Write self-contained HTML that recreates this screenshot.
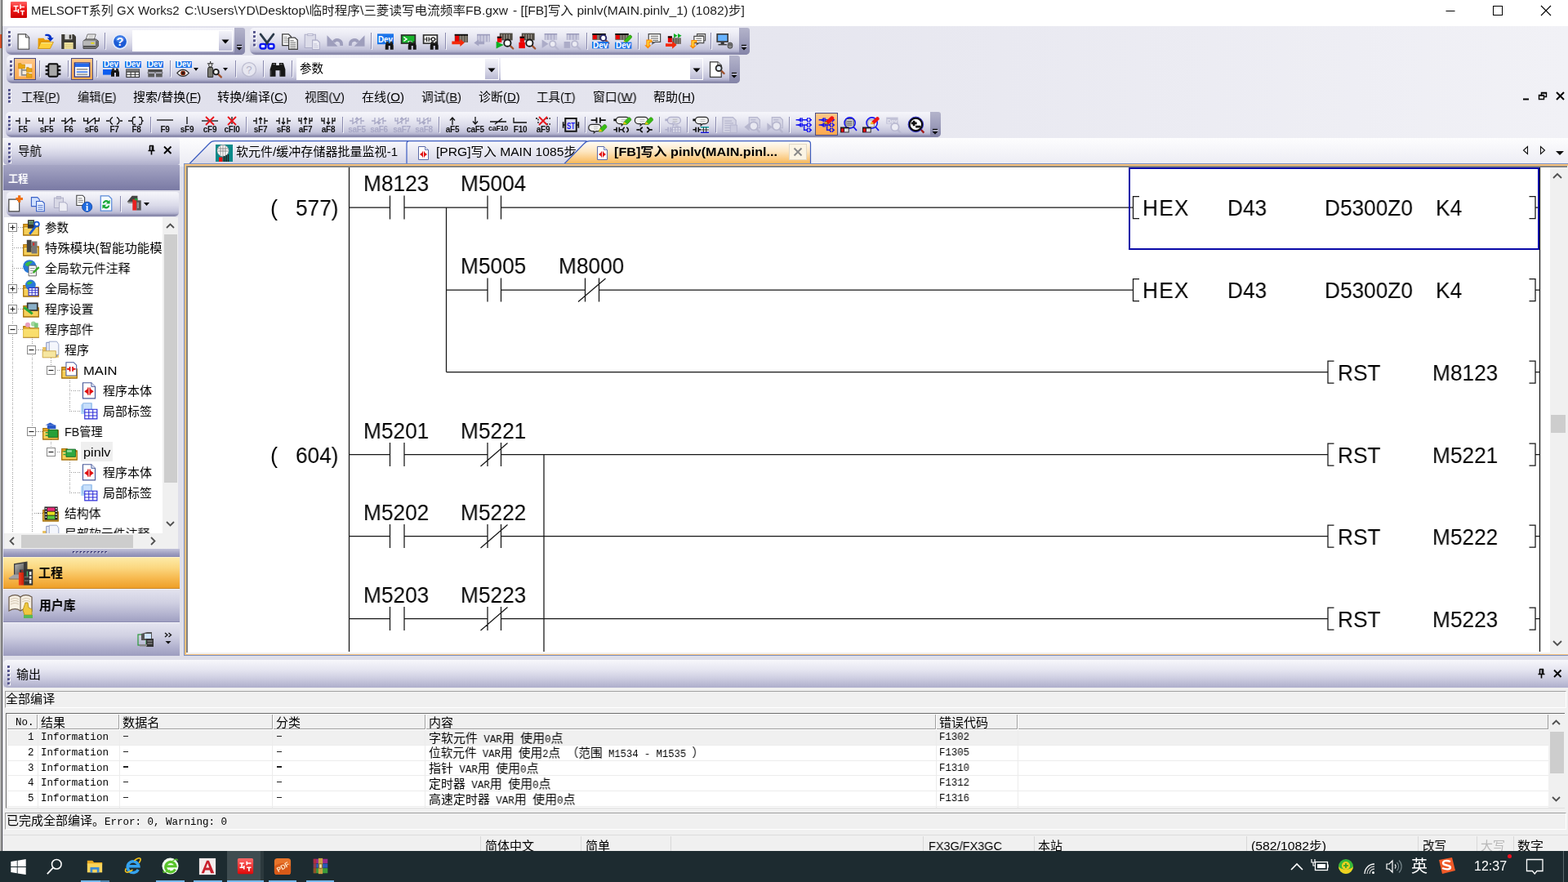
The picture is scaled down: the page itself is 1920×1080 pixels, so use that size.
<!DOCTYPE html>
<html><head><meta charset="utf-8"><title>GX Works2</title><style>html,body{margin:0;padding:0;background:#fff;}
body{width:1920px;height:1080px;overflow:hidden;font-family:"Liberation Sans","Noto Sans CJK SC",sans-serif;}
#root{position:relative;width:1920px;height:1080px;overflow:hidden;background:#dfdfea;}
#root div{position:absolute;box-sizing:border-box;}
.t{white-space:nowrap;line-height:1.2;color:#000;transform-origin:0 50%;will-change:transform;}
.mono{font-family:"Liberation Mono","Noto Sans CJK SC",monospace;}
.tb{border-radius:5px 3px 5px 7px;background:linear-gradient(#f6f6fb 0%,#ebebf4 25%,#dadae9 55%,#c3c3da 80%,#adadca 89%,#8f8fb0 93%,#8585a8 100%);}
svg.i{position:absolute;overflow:visible;}
.lab{text-align:center;font-weight:bold;letter-spacing:-0.3px;line-height:1.1;}
.lad{color:#000;line-height:1.149;transform:scaleX(0.965);}
.osong{font-family:"Liberation Mono","Noto Sans CJK SC",monospace;}
.osong .k{font-size:1.2em;font-family:"Noto Sans CJK SC","Liberation Sans",sans-serif;}
</style></head><body><div id="root"><div style="left:0px;top:0px;width:1920px;height:32px;background:#fff;"></div>
<div style="left:0px;top:32px;width:1920px;height:140px;background:linear-gradient(90deg,#dfdfeb 0%,#e6e6ef 50%,#f1f1f6 100%);"></div>
<div style="left:0px;top:168.5px;width:1920px;height:35px;background:linear-gradient(#fdfdfe,#ebebf3);"></div>
<div style="left:0px;top:0px;width:2.3px;height:1042px;background:#adadad;"></div>
<div style="left:2.3px;top:0px;width:1.1px;height:1042px;background:#484848;"></div>
<div style="left:0px;top:42px;width:2px;height:17px;background:#d0502a;"></div>
<svg class="i" style="left:13px;top:2px" width="20" height="20" viewBox="0 0 20 20"><defs><linearGradient id="gi" x1="0" y1="0" x2="0" y2="1"><stop offset="0" stop-color="#ff6464"/><stop offset="0.450" stop-color="#f01818"/><stop offset="1" stop-color="#cc0000"/></linearGradient></defs><rect width="20" height="20" rx="1" fill="url(#gi)"/><path d="M3.500 5.500H9.500M6.500 5.500V11.500M3.500 11.500H9.500M9.500 9V14M12 3.500V9M12 6.500H17M12 11.500H17M14.500 11.500V16.500" stroke="#fff" stroke-width="1.500" fill="none"/></svg>
<div class="t" style="left:38px;top:4px;font-size:15px;transform:scaleX(1.0004);color:#1c1c1c;">MELSOFT系列 GX Works2</div>
<div class="t" style="left:225.5px;top:4px;font-size:15px;transform:scaleX(1.0396);color:#1c1c1c;">C:\Users\YD\Desktop\临时程序\三菱读写电流频率FB.gxw</div>
<div class="t" style="left:627.5px;top:4px;font-size:15px;transform:scaleX(1.0450);color:#1c1c1c;">- [[FB]写入 pinlv(MAIN.pinlv_1) (1082)步]</div>
<svg class="i" style="left:1760px;top:0" width="160" height="28" viewBox="0 0 160 28"><path d="M10.500 13.500H21.500" stroke="#000" stroke-width="1"/><rect x="68.500" y="7.500" width="11" height="11" fill="none" stroke="#000" stroke-width="1"/><path d="M127 7L139 19M139 7L127 19" stroke="#000" stroke-width="1.1"/></svg>
<div class="tb" style="left:7px;top:33.5px;width:293px;height:33.5px;"></div>
<div style="left:286.5px;top:33.5px;width:13.5px;height:33.5px;background:linear-gradient(#b4b4cb,#9c9cba 55%,#8383a7);border-radius:0 3px 5px 0;"></div>
<svg class="i" style="left:289px;top:53.5px" width="9" height="9" viewBox="0 0 9 9"><path d="M1 1.500h6" stroke="#000" stroke-width="1.300"/><path d="M0.500 4h7l-3.500 3.500z" fill="#000"/><path d="M2 2.800h6" stroke="#fff" stroke-width="0.800" opacity="0.800"/></svg>
<svg class="i" style="left:10.4px;top:38.3px" width="5" height="22.8"><rect x="1.200" y="1.20" width="2.800" height="2.800" fill="#fff"/><rect x="0" y="0.00" width="2.900" height="2.900" fill="#50508a"/><rect x="1.200" y="6.40" width="2.800" height="2.800" fill="#fff"/><rect x="0" y="5.20" width="2.900" height="2.900" fill="#50508a"/><rect x="1.200" y="11.60" width="2.800" height="2.800" fill="#fff"/><rect x="0" y="10.40" width="2.900" height="2.900" fill="#50508a"/><rect x="1.200" y="16.80" width="2.800" height="2.800" fill="#fff"/><rect x="0" y="15.60" width="2.900" height="2.900" fill="#50508a"/></svg>
<svg class="i" style="left:19px;top:40.5px" width="20" height="20" viewBox="0 0 16 16"><path d="M2.500 0.600h7.500l3.300 3.300v11.300h-10.800z" fill="#fff" stroke="#4c4c4c" stroke-width="1"/><path d="M10 0.600v3.300h3.300" fill="#d9d9d9" stroke="#4c4c4c" stroke-width="0.800"/><path d="M3.200 14.600h9.500v-9" stroke="#c8c8c8" stroke-width="0.800" fill="none"/></svg>
<svg class="i" style="left:46px;top:40.5px" width="20" height="20" viewBox="0 0 16 16"><path d="M0.500 4.500h5.500l1.200 1.600h5.300v8.500h-12z" fill="#e89a00"/><path d="M0.500 14.800l2.700-6.300h12.300l-3.200 6.300z" fill="#ffd03a" stroke="#c88600" stroke-width="0.600"/><path d="M3.500 9.300h11" stroke="#fff0a0" stroke-width="0.800"/><path d="M7.500 0.800c3.500-1 6.300 0.700 6.300 3.400h2l-3.200 3.600-3.200-3.600h2c0-1.300-1.700-2.300-3.900-1.700z" fill="#0030c8"/></svg>
<svg class="i" style="left:74px;top:40.5px" width="20" height="20" viewBox="0 0 16 16"><path d="M1 0.800h12l2.200 2.200v12.200h-14.200z" fill="#3c3a34"/><rect x="4.300" y="0.800" width="7.200" height="5" fill="#dcdcdc"/><rect x="8.600" y="1.300" width="1.900" height="3.900" fill="#3c3a34"/><rect x="3.700" y="8.800" width="8.800" height="6.400" fill="#f7e9a8"/><path d="M4.300 10.600h7.600M4.300 12.400h7.600M4.300 14.200h7.600" stroke="#cdba6e" stroke-width="0.700"/></svg>
<svg class="i" style="left:101px;top:40.5px" width="20" height="20" viewBox="0 0 16 16"><path d="M5 0.800h8l-1.800 5.500h-8z" fill="#f6f6f6" stroke="#5a5a5a" stroke-width="0.700"/><path d="M6 2.500h5M5.500 4h5" stroke="#aaa" stroke-width="0.600"/><path d="M0.800 7.300l2.500-1.800h9.700l2.500 1.800v5.200l-2.500 2.300h-12.200z" fill="#8a8a8a" stroke="#3c3c3c" stroke-width="0.700"/><rect x="0.800" y="7.300" width="12" height="4.500" fill="#b8b8b8"/><rect x="8.300" y="8.800" width="3.300" height="1.300" fill="#e8dc00"/><path d="M0.800 12.800h12" stroke="#4c4c4c" stroke-width="1.400"/><path d="M12.800 7.300l2.700 0v5.200l-2.700 2.300z" fill="#6c6c6c"/></svg>
<div style="left:128px;top:39.5px;width:1px;height:20px;background:#8a8aae;"></div>
<div style="left:129px;top:40.5px;width:1px;height:20px;background:#f6f6fb;"></div>
<svg class="i" style="left:137px;top:40.5px" width="20" height="20" viewBox="0 0 16 16"><circle cx="8" cy="8" r="7.600" fill="#e6eefc" opacity="0.950"/><circle cx="8" cy="8" r="6.300" fill="#1c5bd6"/><ellipse cx="8" cy="5.500" rx="4.600" ry="3.300" fill="#5d9af4" opacity="0.600"/><text x="8" y="12.300" text-anchor="middle" font-size="11.500" font-weight="bold" font-family="Liberation Sans" fill="#fff">?</text></svg>
<div style="left:162px;top:37.0px;width:122.5px;height:25.5px;background:#fff;"></div>
<div style="left:268.0px;top:38.0px;width:15.5px;height:23.5px;background:linear-gradient(#f3f3f9,#dcdcea 50%,#b9b9d3);"></div>
<svg class="i" style="left:271.0px;top:47.75px" width="10" height="6" viewBox="0 0 10 6"><path d="M0.500 0.500h9l-4.500 5z" fill="#000"/></svg>
<div class="tb" style="left:306px;top:33.5px;width:612px;height:33.5px;"></div>
<div style="left:904.5px;top:33.5px;width:13.5px;height:33.5px;background:linear-gradient(#b4b4cb,#9c9cba 55%,#8383a7);border-radius:0 3px 5px 0;"></div>
<svg class="i" style="left:907px;top:53.5px" width="9" height="9" viewBox="0 0 9 9"><path d="M1 1.500h6" stroke="#000" stroke-width="1.300"/><path d="M0.500 4h7l-3.500 3.500z" fill="#000"/><path d="M2 2.800h6" stroke="#fff" stroke-width="0.800" opacity="0.800"/></svg>
<svg class="i" style="left:309.5px;top:38.3px" width="5" height="22.8"><rect x="1.200" y="1.20" width="2.800" height="2.800" fill="#fff"/><rect x="0" y="0.00" width="2.900" height="2.900" fill="#50508a"/><rect x="1.200" y="6.40" width="2.800" height="2.800" fill="#fff"/><rect x="0" y="5.20" width="2.900" height="2.900" fill="#50508a"/><rect x="1.200" y="11.60" width="2.800" height="2.800" fill="#fff"/><rect x="0" y="10.40" width="2.900" height="2.900" fill="#50508a"/><rect x="1.200" y="16.80" width="2.800" height="2.800" fill="#fff"/><rect x="0" y="15.60" width="2.900" height="2.900" fill="#50508a"/></svg>
<svg class="i" style="left:317px;top:40.5px" width="20" height="20" viewBox="0 0 16 16"><path d="M1.700 0.800l7.300 9.700M14.300 0.800l-7.300 9.700" stroke="#2b3a4a" stroke-width="2.300" stroke-linecap="round"/><rect x="1.200" y="10.300" width="5.600" height="4.500" rx="1.800" fill="#dfe4ff" stroke="#0a16f0" stroke-width="1.900"/><rect x="9.200" y="10.300" width="5.600" height="4.500" rx="1.800" fill="#dfe4ff" stroke="#0a16f0" stroke-width="1.900"/></svg>
<svg class="i" style="left:345px;top:40.5px" width="20" height="20" viewBox="0 0 16 16"><path d="M0.600 0.600h6l2.500 2.500v8.500h-8.500z" fill="#fff" stroke="#3c3c3c" stroke-width="1"/><path d="M2 3.500h3.500M2 5.300h5.500M2 7.100h5.500M2 8.900h5.500" stroke="#8a8a8a" stroke-width="0.800"/><path d="M6.900 4h6l2.500 2.500v9h-8.500z" fill="#fff" stroke="#3c3c3c" stroke-width="1"/><path d="M8.300 7h3.500M8.300 8.800h5.500M8.300 10.600h5.500M8.300 12.400h5.500M8.300 14.200h5.500" stroke="#6a6a6a" stroke-width="0.800"/></svg>
<svg class="i" style="left:372px;top:40.5px" width="20" height="20" viewBox="0 0 16 16"><path d="M1 1h10.500v13h-10.500z" fill="#dcdce9" stroke="#aeaec8" stroke-width="0.900"/><rect x="3.800" y="0.300" width="5" height="1.800" fill="#eeeef6" stroke="#aeaec8" stroke-width="0.700"/><path d="M8.500 6.500h4.700l2.300 2.300v6.900h-7z" fill="#ededf5" stroke="#aeaec8" stroke-width="0.900"/><path d="M9.800 10.300h3M9.800 12h4.300M9.800 13.700h4.300" stroke="#bcbcd2" stroke-width="0.700"/></svg>
<svg class="i" style="left:400px;top:40.5px" width="20" height="20" viewBox="0 0 16 16"><path d="M0.400 1.800v10.700h10.300z" fill="#9e9ebc"/><path d="M6.800 8.500a4.100 4.100 0 0 1 7.700 2v1.500" fill="none" stroke="#9e9ebc" stroke-width="3"/></svg>
<svg class="i" style="left:427px;top:40.5px" width="20" height="20" viewBox="0 0 16 16"><path d="M15.600 1.800v10.700h-10.300z" fill="#9e9ebc"/><path d="M9.200 8.500a4.100 4.100 0 0 0-7.700 2v1.500" fill="none" stroke="#9e9ebc" stroke-width="3"/></svg>
<div style="left:454px;top:39.5px;width:1px;height:20px;background:#8a8aae;"></div>
<div style="left:455px;top:40.5px;width:1px;height:20px;background:#f6f6fb;"></div>
<svg class="i" style="left:462px;top:40.5px" width="20" height="20" viewBox="0 0 16 16"><rect x="0" y="0.3" width="16" height="10.3" fill="#1b74ea"/><text x="0.8" y="8.486" font-size="9.2" font-family="Liberation Sans" font-weight="bold" fill="#fff" textLength="14.4" lengthAdjust="spacingAndGlyphs">Dev</text><g transform="translate(7.8 7.7)"><path d="M1.200 0h2v1.800h1.600v-1.800h2l1.200 4v4h-3.200v-3.800h-1.600v3.800h-3.200v-4z" fill="#151515"/><path d="M1.600 1.200h1.200M5.200 1.200h1.200" stroke="#6a6a6a" stroke-width="0.700"/></g></svg>
<svg class="i" style="left:490px;top:40.5px" width="20" height="20" viewBox="0 0 16 16"><rect x="0.600" y="0.900" width="14.800" height="9.400" fill="#2c2c2c"/><rect x="2" y="2.200" width="12" height="6.800" fill="#18b42c"/><path d="M3.500 3.500l3 2-3 2M7.500 7.800h4" stroke="#fff" stroke-width="1" fill="none"/><g transform="translate(7.8 7.7)"><path d="M1.200 0h2v1.800h1.600v-1.800h2l1.200 4v4h-3.200v-3.800h-1.600v3.800h-3.200v-4z" fill="#151515"/><path d="M1.600 1.200h1.200M5.200 1.200h1.200" stroke="#6a6a6a" stroke-width="0.700"/></g></svg>
<svg class="i" style="left:517px;top:40.5px" width="20" height="20" viewBox="0 0 16 16"><rect x="0.600" y="0.900" width="14.800" height="9.400" fill="#2c2c2c"/><rect x="2" y="2.200" width="12" height="6.800" fill="#fff"/><path d="M2 5.600h2.500M4.500 3.300v4.600M6.500 3.300v4.600M6.500 5.600h2.500M12.500 5.600h1.500" stroke="#111" stroke-width="0.900"/><circle cx="10.700" cy="5.600" r="1.700" fill="none" stroke="#111" stroke-width="0.900"/><g transform="translate(7.8 7.7)"><path d="M1.200 0h2v1.800h1.600v-1.800h2l1.200 4v4h-3.200v-3.800h-1.600v3.800h-3.200v-4z" fill="#151515"/><path d="M1.600 1.200h1.200M5.200 1.200h1.200" stroke="#6a6a6a" stroke-width="0.700"/></g></svg>
<div style="left:545px;top:39.5px;width:1px;height:20px;background:#8a8aae;"></div>
<div style="left:546px;top:40.5px;width:1px;height:20px;background:#f6f6fb;"></div>
<svg class="i" style="left:553px;top:40.5px" width="20" height="20" viewBox="0 0 16 16"><rect x="3" y="0.7" width="13" height="8" fill="#5c564c"/><rect x="3" y="0.7" width="13" height="1.500" fill="#0a0a0a"/><rect x="3.4" y="2.2" width="3.9" height="5.8" fill="#e80000"/><rect x="7.90" y="2.2" width="1.48" height="6.5" fill="#8a8478"/><rect x="10.60" y="2.2" width="1.48" height="6.5" fill="#8a8478"/><rect x="13.30" y="2.2" width="1.48" height="6.5" fill="#8a8478"/><path d="M0.300 7.500h8v-2.200l4.400 3.700-4.400 3.700v-2.200h-8z" fill="#f42a0a"/></svg>
<svg class="i" style="left:580px;top:40.5px" width="20" height="20" viewBox="0 0 16 16"><rect x="3.3" y="0.7" width="12.7" height="7.6" fill="#b2b2cc"/><rect x="3.3" y="0.7" width="12.7" height="1.300" fill="#9c9cbc"/><rect x="4.30" y="2.0" width="1.500" height="6.3" fill="#cdcde0"/><rect x="7.40" y="2.0" width="1.500" height="6.3" fill="#cdcde0"/><rect x="10.50" y="2.0" width="1.500" height="6.3" fill="#cdcde0"/><rect x="13.60" y="2.0" width="1.500" height="6.3" fill="#cdcde0"/><path d="M10.500 7.700h-5.500v-1.900l-4.700 3.300 4.700 3.300v-1.900h5.500z" fill="#a4a4c2"/></svg>
<svg class="i" style="left:608px;top:40.5px" width="20" height="20" viewBox="0 0 16 16"><rect x="3" y="-0.300" width="12.700" height="7" fill="#4c4840"/><path d="M5 0.800v5M7.500 0.800v5M10 0.800v5M12.500 0.800v5" stroke="#9a948a" stroke-width="1.100"/><rect x="0.7" y="3" width="4.3" height="5.7" fill="#e80000"/><rect x="0.7" y="3" width="4.3" height="1.600" fill="#0a0a0a"/><path d="M-0.300 7.700l7.300 3.500-7.300 3.500z" fill="#0cae24"/><path d="M12.68 11.280000000000001l3.500 3.500" stroke="#a0522d" stroke-width="1.900" stroke-linecap="round"/><circle cx="10.7" cy="9.3" r="3.3" fill="#fff" stroke="#1a1a1a" stroke-width="1.500"/></svg>
<svg class="i" style="left:635px;top:40.5px" width="20" height="20" viewBox="0 0 16 16"><rect x="3" y="-0.300" width="12.700" height="7" fill="#4c4840"/><path d="M5 0.800v5M7.500 0.800v5M10 0.800v5M12.500 0.800v5" stroke="#9a948a" stroke-width="1.100"/><rect x="1.3" y="3" width="4.3" height="5.7" fill="#e80000"/><rect x="1.3" y="3" width="4.3" height="1.600" fill="#0a0a0a"/><rect x="0.300" y="8.700" width="6" height="5.800" fill="#ee0000"/><path d="M12.68 11.280000000000001l3.500 3.500" stroke="#a0522d" stroke-width="1.900" stroke-linecap="round"/><circle cx="10.7" cy="9.3" r="3.3" fill="#fff" stroke="#1a1a1a" stroke-width="1.500"/></svg>
<svg class="i" style="left:663px;top:40.5px" width="20" height="20" viewBox="0 0 16 16"><rect x="3" y="0" width="12.3" height="6.3" fill="#b2b2cc"/><rect x="3" y="0" width="12.3" height="1.300" fill="#9c9cbc"/><rect x="4.00" y="1.3" width="1.500" height="5.0" fill="#cdcde0"/><rect x="7.10" y="1.3" width="1.500" height="5.0" fill="#cdcde0"/><rect x="10.20" y="1.3" width="1.500" height="5.0" fill="#cdcde0"/><rect x="13.30" y="1.3" width="1.500" height="5.0" fill="#cdcde0"/><path d="M0.500 6l6.300 4.200-6.300 4.200z" fill="#acacc8"/><path d="M12.8 12.100000000000001l3.500 3.500" stroke="#b8b8d0" stroke-width="1.900" stroke-linecap="round"/><circle cx="11" cy="10.3" r="3" fill="#ececf4" stroke="#b8b8d0" stroke-width="1.500"/></svg>
<svg class="i" style="left:690px;top:40.5px" width="20" height="20" viewBox="0 0 16 16"><rect x="3" y="0" width="12.3" height="6.3" fill="#b2b2cc"/><rect x="3" y="0" width="12.3" height="1.300" fill="#9c9cbc"/><rect x="4.00" y="1.3" width="1.500" height="5.0" fill="#cdcde0"/><rect x="7.10" y="1.3" width="1.500" height="5.0" fill="#cdcde0"/><rect x="10.20" y="1.3" width="1.500" height="5.0" fill="#cdcde0"/><rect x="13.30" y="1.3" width="1.500" height="5.0" fill="#cdcde0"/><rect x="0.500" y="8" width="6" height="6.300" fill="#acacc8"/><path d="M12.8 12.100000000000001l3.500 3.500" stroke="#b8b8d0" stroke-width="1.900" stroke-linecap="round"/><circle cx="11" cy="10.3" r="3" fill="#ececf4" stroke="#b8b8d0" stroke-width="1.500"/></svg>
<div style="left:718px;top:39.5px;width:1px;height:20px;background:#8a8aae;"></div>
<div style="left:719px;top:40.5px;width:1px;height:20px;background:#f6f6fb;"></div>
<svg class="i" style="left:725px;top:40.5px" width="20" height="20" viewBox="0 0 16 16"><rect x="0.3" y="0" width="13" height="6.3" fill="#5c564c"/><rect x="0.3" y="0" width="13" height="1.500" fill="#0a0a0a"/><rect x="0.7" y="1.5" width="3.9" height="4.1" fill="#e80000"/><rect x="5.20" y="1.5" width="1.48" height="4.8" fill="#8a8478"/><rect x="7.90" y="1.5" width="1.48" height="4.8" fill="#8a8478"/><rect x="10.60" y="1.5" width="1.48" height="4.8" fill="#8a8478"/><path d="M12.68 5.9799999999999995l3.500 3.500" stroke="#a0522d" stroke-width="1.900" stroke-linecap="round"/><circle cx="11" cy="4.3" r="2.8" fill="#fff" stroke="#26266a" stroke-width="1.500"/><rect x="0" y="8" width="16.3" height="6.7" fill="#1b74ea"/><text x="0.8" y="14.187999999999999" font-size="8.6" font-family="Liberation Sans" font-weight="bold" fill="#fff" textLength="14.700000000000001" lengthAdjust="spacingAndGlyphs">Dev</text></svg>
<svg class="i" style="left:753px;top:40.5px" width="20" height="20" viewBox="0 0 16 16"><rect x="0.3" y="0" width="13" height="6.3" fill="#5c564c"/><rect x="0.3" y="0" width="13" height="1.500" fill="#0a0a0a"/><rect x="0.7" y="1.5" width="3.9" height="4.1" fill="#e80000"/><rect x="5.20" y="1.5" width="1.48" height="4.8" fill="#8a8478"/><rect x="7.90" y="1.5" width="1.48" height="4.8" fill="#8a8478"/><rect x="10.60" y="1.5" width="1.48" height="4.8" fill="#8a8478"/><path d="M9 7l5-5.200q1.500-0.800 2.300 0.800v1.500l-5 5z" fill="#36c010" stroke="#1c7a08" stroke-width="0.500"/><path d="M9 7l2.300 2.100-2.800 0.700q-0.600-1.500 0.500-2.800z" fill="#e8c810"/><rect x="0" y="8.5" width="16.3" height="6.5" fill="#1b74ea"/><text x="0.8" y="14.588000000000001" font-size="8.6" font-family="Liberation Sans" font-weight="bold" fill="#fff" textLength="14.700000000000001" lengthAdjust="spacingAndGlyphs">Dev</text></svg>
<div style="left:781px;top:39.5px;width:1px;height:20px;background:#8a8aae;"></div>
<div style="left:782px;top:40.5px;width:1px;height:20px;background:#f6f6fb;"></div>
<svg class="i" style="left:788px;top:40.5px" width="20" height="20" viewBox="0 0 16 16"><path d="M5 0.500h11.500v7.800000000000001h-5.175l-2.500 1.500l0.500-1.500h-4.325z" fill="#fff" stroke="#4a4a4a" stroke-width="1"/><path d="M7 2.700h7.500M7 4.700h7.500M9 6.700h5.500" stroke="#7a7a7a" stroke-width="0.900"/><g transform="translate(0 0)"><path d="M2.700 6h5.600v2.700h-2.300v2.700h1.700l-3.400 3.300-3.300-3.300h1.700z" fill="#ff8a00"/><path d="M3.700 7h3.600v0.800h-2.300v4.600h-1.300z" fill="#ffe040"/></g></svg>
<svg class="i" style="left:815px;top:40.5px" width="20" height="20" viewBox="0 0 16 16"><rect x="2.3" y="2.7" width="4" height="6" fill="#e80000"/><rect x="2.3" y="2.7" width="4" height="1.600" fill="#0a0a0a"/><rect x="6.700" y="4.300" width="8.300" height="6" fill="#5c564c"/><path d="M9 4.300v6M11.300 4.300v6M13.500 4.300v6" stroke="#9a948a" stroke-width="0.900"/><path d="M8 0l3.700 2.200-3.700 2.200zM12 0l3.700 2.200-3.700 2.200z" fill="#0cae24"/><path d="M0 9.700h6.500v-2.200l4.400 3.700-4.400 3.700v-2.200h-6.500z" fill="#f42a0a"/></svg>
<svg class="i" style="left:843px;top:40.5px" width="20" height="20" viewBox="0 0 16 16"><path d="M8.500 0.500h8v6.500h-8z" fill="#f2f2f2" stroke="#4a4a4a" stroke-width="0.900"/><path d="M10 2.200h5" stroke="#7a7a7a" stroke-width="0.900"/><path d="M5.500 2.700h9.500v6.500h-4.275l-2.500 1.500l0.500-1.500h-3.2250000000000005z" fill="#fff" stroke="#4a4a4a" stroke-width="1"/><path d="M7.500 4.900h5.500M7.500 6.900h5.500M9.500 8.900h3.500" stroke="#7a7a7a" stroke-width="0.900"/><g transform="translate(0 0.3)"><path d="M2.700 6h5.600v2.700h-2.300v2.700h1.700l-3.400 3.300-3.300-3.300h1.700z" fill="#ff8a00"/><path d="M3.700 7h3.600v0.800h-2.300v4.600h-1.300z" fill="#ffe040"/></g></svg>
<div style="left:870px;top:39.5px;width:1px;height:20px;background:#8a8aae;"></div>
<div style="left:871px;top:40.5px;width:1px;height:20px;background:#f6f6fb;"></div>
<svg class="i" style="left:877px;top:40.5px" width="20" height="20" viewBox="0 0 16 16"><rect x="0.300" y="0" width="11.700" height="8.700" fill="#3c3c3c"/><rect x="1.700" y="1.300" width="9" height="6" fill="#66b2ff"/><rect x="4.500" y="8.700" width="3.300" height="1.600" fill="#2c2c2c"/><rect x="2" y="10.300" width="8.300" height="1.200" fill="#3c3c3c"/><rect x="11.300" y="9" width="4.500" height="5.500" rx="1.800" fill="#8a8a8a" stroke="#3a3a3a" stroke-width="0.700"/><path d="M11.300 11.200h4.500M13.500 9v2.200" stroke="#3a3a3a" stroke-width="0.600"/></svg>
<div class="tb" style="left:8px;top:68px;width:898px;height:33.5px;"></div>
<div style="left:892.5px;top:68px;width:13.5px;height:33.5px;background:linear-gradient(#b4b4cb,#9c9cba 55%,#8383a7);border-radius:0 3px 5px 0;"></div>
<svg class="i" style="left:895px;top:88px" width="9" height="9" viewBox="0 0 9 9"><path d="M1 1.500h6" stroke="#000" stroke-width="1.300"/><path d="M0.500 4h7l-3.500 3.500z" fill="#000"/><path d="M2 2.800h6" stroke="#fff" stroke-width="0.800" opacity="0.800"/></svg>
<svg class="i" style="left:11.5px;top:74.2px" width="5" height="22.8"><rect x="1.200" y="1.20" width="2.800" height="2.800" fill="#fff"/><rect x="0" y="0.00" width="2.900" height="2.900" fill="#50508a"/><rect x="1.200" y="6.40" width="2.800" height="2.800" fill="#fff"/><rect x="0" y="5.20" width="2.900" height="2.900" fill="#50508a"/><rect x="1.200" y="11.60" width="2.800" height="2.800" fill="#fff"/><rect x="0" y="10.40" width="2.900" height="2.900" fill="#50508a"/><rect x="1.200" y="16.80" width="2.800" height="2.800" fill="#fff"/><rect x="0" y="15.60" width="2.900" height="2.900" fill="#50508a"/></svg>
<div style="left:17px;top:71px;width:27px;height:27px;background:linear-gradient(#ffc98a,#ffb565 50%,#ffa94e);border:1.500px solid #4a4a84;"></div>
<svg class="i" style="left:20px;top:75px" width="21" height="21" viewBox="0 0 16 16"><rect x="2.500" y="2.500" width="12" height="11.500" fill="#f6f6f6" opacity="0.850"/><path d="M5 6.500v6.300h5.500M5 8.300h5.500" stroke="#8c8c8c" stroke-width="1.300" fill="none"/><path d="M2 2h2.300l0.800 1h2.900v3.800h-6z" fill="#eaa612" stroke="#b87c00" stroke-width="0.400"/><path d="M9.500 5.800h2l0.700 0.900h2.300v3.300h-5z" fill="#eaa612" stroke="#b87c00" stroke-width="0.400"/><path d="M9.500 11h2l0.700 0.900h2.300v3.300h-5z" fill="#eaa612" stroke="#b87c00" stroke-width="0.400"/></svg>
<div style="left:48px;top:74px;width:1px;height:20px;background:#8a8aae;"></div>
<div style="left:49px;top:75px;width:1px;height:20px;background:#f6f6fb;"></div>
<svg class="i" style="left:55px;top:75.5px" width="20" height="20" viewBox="0 0 16 16"><path d="M0.500 4.300h3M0.500 8h3M0.500 11.700h3M12.500 4.300h3M12.500 8h3M12.500 11.700h3" stroke="#0c0c0c" stroke-width="1.900"/><rect x="3.500" y="1.800" width="9" height="12.400" rx="1.200" fill="#a8a8a8" stroke="#0c0c0c" stroke-width="1.500"/></svg>
<div style="left:83px;top:74px;width:1px;height:20px;background:#8a8aae;"></div>
<div style="left:84px;top:75px;width:1px;height:20px;background:#f6f6fb;"></div>
<div style="left:87px;top:71px;width:27px;height:27px;background:linear-gradient(#ffc98a,#ffb565 50%,#ffa94e);border:1.500px solid #4a4a84;"></div>
<svg class="i" style="left:90px;top:75px" width="21" height="21" viewBox="0 0 16 16"><rect x="1" y="1.500" width="14" height="13" fill="#fff" stroke="#28388c" stroke-width="1"/><rect x="1.500" y="2" width="13" height="3.300" fill="#2468ea"/><path d="M2.800 7.500h10.400M2.800 12.300h10.400" stroke="#a8a8a8" stroke-width="1.600"/><path d="M2.800 10h10.400" stroke="#2468ea" stroke-width="1.100"/></svg>
<div style="left:118px;top:74px;width:1px;height:20px;background:#8a8aae;"></div>
<div style="left:119px;top:75px;width:1px;height:20px;background:#f6f6fb;"></div>
<svg class="i" style="left:126px;top:75px" width="20" height="20" viewBox="0 0 16 16"><rect x="0" y="0" width="16" height="6.4" fill="#1b74ea"/><text x="0.8" y="5.906000000000001" font-size="8.2" font-family="Liberation Sans" font-weight="bold" fill="#fff" textLength="14.4" lengthAdjust="spacingAndGlyphs">Dev</text><rect x="0" y="8" width="9" height="5.300" fill="#0c5cf0"/><g transform="translate(8 7)"><path d="M1.200 0h2v1.800h1.600v-1.800h2l1.200 4v4h-3.200v-3.800h-1.600v3.800h-3.200v-4z" fill="#151515"/><path d="M1.600 1.200h1.200M5.200 1.200h1.200" stroke="#6a6a6a" stroke-width="0.700"/></g></svg>
<svg class="i" style="left:153px;top:75px" width="20" height="20" viewBox="0 0 16 16"><rect x="0" y="0" width="16" height="6.4" fill="#1b74ea"/><text x="0.8" y="5.906000000000001" font-size="8.2" font-family="Liberation Sans" font-weight="bold" fill="#fff" textLength="14.4" lengthAdjust="spacingAndGlyphs">Dev</text><rect x="1.500" y="8" width="12.500" height="7.500" fill="#fff" stroke="#2c2c2c" stroke-width="0.900"/><rect x="1.500" y="8" width="12.500" height="2.500" fill="#7a7a7a"/><path d="M1.500 10.500h12.500M1.500 13h12.500M5.700 10.500v5M9.900 10.500v5" stroke="#2c2c2c" stroke-width="0.800"/></svg>
<svg class="i" style="left:180px;top:75px" width="20" height="20" viewBox="0 0 16 16"><rect x="0" y="0" width="16" height="6.4" fill="#1b74ea"/><text x="0.8" y="5.906000000000001" font-size="8.2" font-family="Liberation Sans" font-weight="bold" fill="#fff" textLength="14.4" lengthAdjust="spacingAndGlyphs">Dev</text><rect x="1" y="8" width="14" height="2.800" fill="#4c4c4c"/><rect x="1" y="11.800" width="6.300" height="3.700" fill="#5c5c5c"/><rect x="8.700" y="11.800" width="6.300" height="3.700" fill="#5c5c5c"/><path d="M1 10.800v1M15 10.800v1M8 10.800v1" stroke="#4c4c4c" stroke-width="1"/></svg>
<div style="left:208px;top:74px;width:1px;height:20px;background:#8a8aae;"></div>
<div style="left:209px;top:75px;width:1px;height:20px;background:#f6f6fb;"></div>
<svg class="i" style="left:215px;top:75px" width="20" height="20" viewBox="0 0 16 16"><rect x="0" y="0" width="16" height="6.4" fill="#1b74ea"/><text x="0.8" y="5.906000000000001" font-size="8.2" font-family="Liberation Sans" font-weight="bold" fill="#fff" textLength="14.4" lengthAdjust="spacingAndGlyphs">Dev</text><path d="M1.500 11.500c3.500-4.300 8-4.300 11.500 0c-3.500 4.300-8 4.300-11.500 0z" fill="#fff" stroke="#2c2c2c" stroke-width="1"/><circle cx="7.300" cy="11.500" r="2.400" fill="#7a2408"/><circle cx="7.300" cy="11.500" r="1" fill="#111"/></svg>
<svg class="i" style="left:251.5px;top:75px" width="20" height="20" viewBox="0 0 16 16"><path d="M4.500 0v3M1.500 2.300h6" stroke="#3c3c3c" stroke-width="1"/><circle cx="4.500" cy="3.800" r="1.700" fill="#d8d8d8" stroke="#3c3c3c" stroke-width="0.800"/><path d="M2.500 6h4l0.500 2v7.500h-5v-7.500z" fill="#7a7a72" stroke="#2c2c2c" stroke-width="0.800"/><path d="M11.56 12.06l3.500 3.500" stroke="#a0522d" stroke-width="1.900" stroke-linecap="round"/><circle cx="10" cy="10.5" r="2.6" fill="#fff" stroke="#1a1a1a" stroke-width="1.500"/></svg>
<svg class="i" style="left:237px;top:83px" width="6" height="4"><path d="M0 0h6l-3 3.700z" fill="#000"/></svg>
<svg class="i" style="left:273px;top:83px" width="6" height="4"><path d="M0 0h6l-3 3.700z" fill="#000"/></svg>
<div style="left:288px;top:74px;width:1px;height:20px;background:#8a8aae;"></div>
<div style="left:289px;top:75px;width:1px;height:20px;background:#f6f6fb;"></div>
<svg class="i" style="left:295px;top:75px" width="20" height="20" viewBox="0 0 16 16"><circle cx="8" cy="8" r="6.800" fill="#e6e6f0" stroke="#bcbcd0" stroke-width="1"/><text x="8" y="12" text-anchor="middle" font-size="10.500" font-family="Liberation Sans" fill="#b4b4c8">?</text></svg>
<div style="left:322px;top:74px;width:1px;height:20px;background:#8a8aae;"></div>
<div style="left:323px;top:75px;width:1px;height:20px;background:#f6f6fb;"></div>
<svg class="i" style="left:330px;top:75px" width="20" height="20" viewBox="0 0 16 16"><path d="M2.500 1.500h4v2.500h3v-2.500h4l2 6.500v7h-5.500v-6h-4v6h-5.500v-7z" fill="#161616"/><path d="M3.500 2.800h2M10.500 2.800h2" stroke="#7a7a7a" stroke-width="1"/><path d="M1.500 9v5M10.500 9v5" stroke="#4c4c4c" stroke-width="0.800"/></svg>
<div style="left:357px;top:74px;width:1px;height:20px;background:#8a8aae;"></div>
<div style="left:358px;top:75px;width:1px;height:20px;background:#f6f6fb;"></div>
<div style="left:363px;top:71px;width:247.5px;height:27px;background:#fff;"></div>
<div style="left:594.0px;top:72px;width:15.5px;height:25px;background:linear-gradient(#f3f3f9,#dcdcea 50%,#b9b9d3);"></div>
<svg class="i" style="left:597.0px;top:82.5px" width="10" height="6" viewBox="0 0 10 6"><path d="M0.500 0.500h9l-4.500 5z" fill="#000"/></svg>
<div class="t" style="left:366.5px;top:76px;font-size:14.5px;">参数</div>
<div style="left:613px;top:71px;width:248px;height:27px;background:#fff;"></div>
<div style="left:844.5px;top:72px;width:15.5px;height:25px;background:linear-gradient(#f3f3f9,#dcdcea 50%,#b9b9d3);"></div>
<svg class="i" style="left:847.5px;top:82.5px" width="10" height="6" viewBox="0 0 10 6"><path d="M0.500 0.500h9l-4.500 5z" fill="#000"/></svg>
<svg class="i" style="left:867px;top:75px" width="20" height="20" viewBox="0 0 16 16"><path d="M2 0.600h7.500l3.500 3.500v11.300h-11z" fill="#fff" stroke="#3c3c3c" stroke-width="1"/><path d="M9.500 0.600v3.500h3.500" fill="#d9d9d9" stroke="#3c3c3c" stroke-width="0.700"/><path d="M12.18 8.48l3.500 3.500" stroke="#a0522d" stroke-width="1.900" stroke-linecap="round"/><circle cx="10.5" cy="6.8" r="2.8" fill="#e6eefa" stroke="#2c2c2c" stroke-width="1.500"/></svg>
<svg class="i" style="left:10.4px;top:109.2px" width="5" height="20.4"><rect x="1.200" y="1.20" width="2.800" height="2.800" fill="#fff"/><rect x="0" y="0.00" width="2.900" height="2.900" fill="#50508a"/><rect x="1.200" y="5.80" width="2.800" height="2.800" fill="#fff"/><rect x="0" y="4.60" width="2.900" height="2.900" fill="#50508a"/><rect x="1.200" y="10.40" width="2.800" height="2.800" fill="#fff"/><rect x="0" y="9.20" width="2.900" height="2.900" fill="#50508a"/><rect x="1.200" y="15.00" width="2.800" height="2.800" fill="#fff"/><rect x="0" y="13.80" width="2.900" height="2.900" fill="#50508a"/></svg>
<div class="t" style="left:26px;top:109.5px;font-size:15px;transform:scaleX(0.9497);color:#000;">工程(<u>P</u>)</div>
<div class="t" style="left:94.5px;top:109.5px;font-size:15px;transform:scaleX(0.9497);color:#000;">编辑(<u>E</u>)</div>
<div class="t" style="left:163px;top:109.5px;font-size:15px;transform:scaleX(0.9959);color:#000;">搜索/替换(<u>F</u>)</div>
<div class="t" style="left:266px;top:109.5px;font-size:15px;transform:scaleX(1.0116);color:#000;">转换/编译(<u>C</u>)</div>
<div class="t" style="left:373px;top:109.5px;font-size:15px;transform:scaleX(0.9797);color:#000;">视图(<u>V</u>)</div>
<div class="t" style="left:442.5px;top:109.5px;font-size:15px;transform:scaleX(1.0064);color:#000;">在线(<u>O</u>)</div>
<div class="t" style="left:515.5px;top:109.5px;font-size:15px;transform:scaleX(0.9797);color:#000;">调试(<u>B</u>)</div>
<div class="t" style="left:585.5px;top:109.5px;font-size:15px;transform:scaleX(0.9932);color:#000;">诊断(<u>D</u>)</div>
<div class="t" style="left:657px;top:109.5px;font-size:15px;transform:scaleX(0.9660);color:#000;">工具(<u>T</u>)</div>
<div class="t" style="left:726px;top:109.5px;font-size:15px;transform:scaleX(0.9876);color:#000;">窗口(<u>W</u>)</div>
<div class="t" style="left:800px;top:109.5px;font-size:15px;transform:scaleX(1.0031);color:#000;">帮助(<u>H</u>)</div>
<svg class="i" style="left:1862px;top:110px" width="56" height="16" viewBox="0 0 56 16"><path d="M3 11.500h7" stroke="#000" stroke-width="2"/><path d="M25.500 3.500h6v5h-6zM25 4h7" stroke="#000" stroke-width="1.400" fill="none"/><path d="M22.500 6.500h6v5h-6z" fill="#eee" stroke="#000" stroke-width="1.400"/><path d="M22 7h7" stroke="#000" stroke-width="1.400"/><path d="M44 3l9 9M53 3l-9 9" stroke="#000" stroke-width="2"/></svg>
<div class="tb" style="left:7px;top:137px;width:1145px;height:31px;"></div>
<div style="left:1138.5px;top:137px;width:13.5px;height:31px;background:linear-gradient(#b4b4cb,#9c9cba 55%,#8383a7);border-radius:0 3px 5px 0;"></div>
<svg class="i" style="left:1141px;top:157px" width="9" height="9" viewBox="0 0 9 9"><path d="M1 1.500h6" stroke="#000" stroke-width="1.300"/><path d="M0.500 4h7l-3.500 3.500z" fill="#000"/><path d="M2 2.800h6" stroke="#fff" stroke-width="0.800" opacity="0.800"/></svg>
<svg class="i" style="left:10.4px;top:142.3px" width="5" height="21.2"><rect x="1.200" y="1.20" width="2.800" height="2.800" fill="#fff"/><rect x="0" y="0.00" width="2.900" height="2.900" fill="#50508a"/><rect x="1.200" y="6.00" width="2.800" height="2.800" fill="#fff"/><rect x="0" y="4.80" width="2.900" height="2.900" fill="#50508a"/><rect x="1.200" y="10.80" width="2.800" height="2.800" fill="#fff"/><rect x="0" y="9.60" width="2.900" height="2.900" fill="#50508a"/><rect x="1.200" y="15.60" width="2.800" height="2.800" fill="#fff"/><rect x="0" y="14.40" width="2.900" height="2.900" fill="#50508a"/></svg>
<div style="left:183.5px;top:143px;width:1px;height:19px;background:#8a8aae;"></div>
<div style="left:184.5px;top:144px;width:1px;height:19px;background:#f6f6fb;"></div>
<div style="left:301.3px;top:143px;width:1px;height:19px;background:#8a8aae;"></div>
<div style="left:302.3px;top:144px;width:1px;height:19px;background:#f6f6fb;"></div>
<div style="left:419px;top:143px;width:1px;height:19px;background:#8a8aae;"></div>
<div style="left:420px;top:144px;width:1px;height:19px;background:#f6f6fb;"></div>
<div style="left:537px;top:143px;width:1px;height:19px;background:#8a8aae;"></div>
<div style="left:538px;top:144px;width:1px;height:19px;background:#f6f6fb;"></div>
<div style="left:682px;top:143px;width:1px;height:19px;background:#8a8aae;"></div>
<div style="left:683px;top:144px;width:1px;height:19px;background:#f6f6fb;"></div>
<div style="left:716px;top:143px;width:1px;height:19px;background:#8a8aae;"></div>
<div style="left:717px;top:144px;width:1px;height:19px;background:#f6f6fb;"></div>
<div style="left:807px;top:143px;width:1px;height:19px;background:#8a8aae;"></div>
<div style="left:808px;top:144px;width:1px;height:19px;background:#f6f6fb;"></div>
<div style="left:841px;top:143px;width:1px;height:19px;background:#8a8aae;"></div>
<div style="left:842px;top:144px;width:1px;height:19px;background:#f6f6fb;"></div>
<div style="left:876px;top:143px;width:1px;height:19px;background:#8a8aae;"></div>
<div style="left:877px;top:144px;width:1px;height:19px;background:#f6f6fb;"></div>
<div style="left:966px;top:143px;width:1px;height:19px;background:#8a8aae;"></div>
<div style="left:967px;top:144px;width:1px;height:19px;background:#f6f6fb;"></div>
<svg class="i" style="left:18.3px;top:143px" width="20" height="10" viewBox="0 0 20 10"><path d="M1 5h5M6 1v8M14 1v8M14 5h5" stroke="#111" stroke-width="1.300" fill="none"/></svg>
<div class="t lab" style="left:8.3px;top:153px;width:40px;font-size:10px;color:#111;">F5</div>
<svg class="i" style="left:46.5px;top:143px" width="20" height="10" viewBox="0 0 20 10"><path d="M0.700 1v4h4.800M5.500 1v8M14.500 1v8M14.500 5h4.800v-4" stroke="#111" stroke-width="1.300" fill="none"/></svg>
<div class="t lab" style="left:36.5px;top:153px;width:40px;font-size:10px;color:#111;">sF5</div>
<svg class="i" style="left:73.8px;top:143px" width="20" height="10" viewBox="0 0 20 10"><path d="M1 5h5M6 1v8M14 1v8M14 5h5M5 9l9-8" stroke="#111" stroke-width="1.300" fill="none"/></svg>
<div class="t lab" style="left:63.8px;top:153px;width:40px;font-size:10px;color:#111;">F6</div>
<svg class="i" style="left:101.7px;top:143px" width="20" height="10" viewBox="0 0 20 10"><path d="M0.700 1v4h4.800M5.500 1v8M14.500 1v8M14.500 5h4.800v-4M4.500 9l10-8" stroke="#111" stroke-width="1.300" fill="none"/></svg>
<div class="t lab" style="left:91.7px;top:153px;width:40px;font-size:10px;color:#111;">sF6</div>
<svg class="i" style="left:129.5px;top:143px" width="20" height="10" viewBox="0 0 20 10"><path d="M0 5h4M8 0.500c-4 2.500-4 6.500 0 9M13 0.500c4 2.500 4 6.500 0 9M17 5h3" stroke="#111" stroke-width="1.300" fill="none"/></svg>
<div class="t lab" style="left:119.5px;top:153px;width:40px;font-size:10px;color:#111;">F7</div>
<svg class="i" style="left:157px;top:143px" width="20" height="10" viewBox="0 0 20 10"><path d="M0 5h4M9 0.500h-2q-1.500 0-1.500 1.500v2l-1.500 1 1.500 1v2q0 1.500 1.500 1.500h2M13 0.500h2q1.500 0 1.500 1.500v2l1.500 1-1.500 1v2q0 1.500-1.500 1.500h-2" stroke="#111" stroke-width="1.300" fill="none"/></svg>
<div class="t lab" style="left:147px;top:153px;width:40px;font-size:10px;color:#111;">F8</div>
<svg class="i" style="left:192px;top:143px" width="20" height="10" viewBox="0 0 20 10"><path d="M0 4h20" stroke="#111" stroke-width="1.300" fill="none"/></svg>
<div class="t lab" style="left:182px;top:153px;width:40px;font-size:10px;color:#111;">F9</div>
<svg class="i" style="left:219px;top:143px" width="20" height="10" viewBox="0 0 20 10"><path d="M10 0v9" stroke="#111" stroke-width="1.300" fill="none"/></svg>
<div class="t lab" style="left:209px;top:153px;width:40px;font-size:10px;color:#111;">sF9</div>
<svg class="i" style="left:246.7px;top:143px" width="20" height="10" viewBox="0 0 20 10"><path d="M0 5h20" stroke="#111" stroke-width="1.300" fill="none"/><path d="M5 0l10 10M15 0l-10 10" stroke="#e8141a" stroke-width="1.800"/></svg>
<div class="t lab" style="left:236.7px;top:153px;width:40px;font-size:10px;color:#111;">cF9</div>
<svg class="i" style="left:274.2px;top:143px" width="20" height="10" viewBox="0 0 20 10"><path d="M10 0v9" stroke="#111" stroke-width="1.300" fill="none"/><path d="M5 0l10 10M15 0l-10 10" stroke="#e8141a" stroke-width="1.800"/></svg>
<div class="t lab" style="left:264.2px;top:153px;width:40px;font-size:10px;color:#111;">cFI0</div>
<svg class="i" style="left:309px;top:143px" width="20" height="10" viewBox="0 0 20 10"><path d="M1 5h4M5 1v8M15 1v8M15 5h4M10 9v-8M8 3.500l2-2.500 2 2.500" stroke="#111" stroke-width="1.300" fill="none"/></svg>
<div class="t lab" style="left:299px;top:153px;width:40px;font-size:10px;color:#111;">sF7</div>
<svg class="i" style="left:336.5px;top:143px" width="20" height="10" viewBox="0 0 20 10"><path d="M1 5h4M5 1v8M15 1v8M15 5h4M10 1v8M8 6.500l2 2.500 2-2.500" stroke="#111" stroke-width="1.300" fill="none"/></svg>
<div class="t lab" style="left:326.5px;top:153px;width:40px;font-size:10px;color:#111;">sF8</div>
<svg class="i" style="left:364px;top:143px" width="20" height="10" viewBox="0 0 20 10"><path d="M2 1v4h3M5 1v8M15 1v8M15 5h3v-4M10 9v-8M8 3.500l2-2.500 2 2.500" stroke="#111" stroke-width="1.300" fill="none"/></svg>
<div class="t lab" style="left:354px;top:153px;width:40px;font-size:10px;color:#111;">aF7</div>
<svg class="i" style="left:391.5px;top:143px" width="20" height="10" viewBox="0 0 20 10"><path d="M2 1v4h3M5 1v8M15 1v8M15 5h3v-4M10 1v8M8 6.500l2 2.500 2-2.500" stroke="#111" stroke-width="1.300" fill="none"/></svg>
<div class="t lab" style="left:381.5px;top:153px;width:40px;font-size:10px;color:#111;">aF8</div>
<svg class="i" style="left:426.5px;top:143px" width="20" height="10" viewBox="0 0 20 10"><path d="M1 5h4M5 1v8M15 1v8M15 5h4M10 9v-8M8 3.500l2-2.500 2 2.500M4 9l12-8" stroke="#a9a9c6" stroke-width="1.300" fill="none"/></svg>
<div class="t lab" style="left:416.5px;top:153px;width:40px;font-size:10px;color:#a9a9c6;">saF5</div>
<svg class="i" style="left:454px;top:143px" width="20" height="10" viewBox="0 0 20 10"><path d="M1 5h4M5 1v8M15 1v8M15 5h4M10 1v8M8 6.500l2 2.500 2-2.500M4 9l12-8" stroke="#a9a9c6" stroke-width="1.300" fill="none"/></svg>
<div class="t lab" style="left:444px;top:153px;width:40px;font-size:10px;color:#a9a9c6;">saF6</div>
<svg class="i" style="left:481.5px;top:143px" width="20" height="10" viewBox="0 0 20 10"><path d="M2 1v4h3M5 1v8M15 1v8M15 5h3v-4M10 9v-8M8 3.500l2-2.500 2 2.500M4 9l12-8" stroke="#a9a9c6" stroke-width="1.300" fill="none"/></svg>
<div class="t lab" style="left:471.5px;top:153px;width:40px;font-size:10px;color:#a9a9c6;">saF7</div>
<svg class="i" style="left:509px;top:143px" width="20" height="10" viewBox="0 0 20 10"><path d="M2 1v4h3M5 1v8M15 1v8M15 5h3v-4M10 1v8M8 6.500l2 2.500 2-2.500M4 9l12-8" stroke="#a9a9c6" stroke-width="1.300" fill="none"/></svg>
<div class="t lab" style="left:499px;top:153px;width:40px;font-size:10px;color:#a9a9c6;">saF8</div>
<svg class="i" style="left:544px;top:143px" width="20" height="10" viewBox="0 0 20 10"><path d="M10 10v-9M7 4.500l3-3.500 3 3.500" stroke="#111" stroke-width="1.300" fill="none"/></svg>
<div class="t lab" style="left:534px;top:153px;width:40px;font-size:10px;color:#111;">aF5</div>
<svg class="i" style="left:571.5px;top:143px" width="20" height="10" viewBox="0 0 20 10"><path d="M10 0v9M7 5.500l3 3.500 3-3.500" stroke="#111" stroke-width="1.300" fill="none"/></svg>
<div class="t lab" style="left:561.5px;top:153px;width:40px;font-size:10px;color:#111;">caF5</div>
<svg class="i" style="left:599.5px;top:143px" width="20" height="10" viewBox="0 0 20 10"><path d="M0 6h20M6 9l9-7" stroke="#111" stroke-width="1.300" fill="none"/></svg>
<div class="t lab" style="left:589.5px;top:153px;width:40px;font-size:9px;color:#111;">caF10</div>
<svg class="i" style="left:627px;top:143px" width="20" height="10" viewBox="0 0 20 10"><path d="M2 1v6h16" stroke="#111" stroke-width="1.300" fill="none"/></svg>
<div class="t lab" style="left:617px;top:153px;width:40px;font-size:10px;color:#111;">F10</div>
<svg class="i" style="left:654.5px;top:143px" width="20" height="10" viewBox="0 0 20 10"><path d="M1 2h3v7M14 2h5M14 9h5" stroke="#111" stroke-width="1.300" fill="none" stroke-dasharray="2 1.500"/><path d="M5 0l10 10M15 0l-10 10" stroke="#e8141a" stroke-width="1.800"/></svg>
<div class="t lab" style="left:644.5px;top:153px;width:40px;font-size:10px;color:#111;">aF9</div>
<svg class="i" style="left:689.0px;top:142.5px" width="20" height="20" viewBox="0 0 16 16"><path d="M0.500 5v6M15.500 5v6M0.500 8h2M13.500 8h2" stroke="#111" stroke-width="1.300"/><rect x="2.600" y="1.600" width="10.800" height="12.600" fill="#dcdce9" stroke="#161616" stroke-width="1.600"/><text x="4" y="11.600" font-size="9" font-weight="bold" font-family="Liberation Sans" fill="#1a1af4" textLength="8" lengthAdjust="spacingAndGlyphs">ST</text></svg>
<svg class="i" style="left:723.0px;top:142.5px" width="20" height="20" viewBox="0 0 16 16"><path d="M0.500 3.300h5.500M6 0.500v5.600M9.500 0.500v5.600M9.500 3.300h5.500" stroke="#111" stroke-width="1.500" fill="none"/><path d="M3.250 7.500h4.0a3.250 3.250 0 0 1 0 6.500h-2.0l-1.800 1.800v-1.800h-2.0a3.250 3.250 0 0 1 0-6.500z" fill="#f2f2f2" stroke="#2a2a2a" stroke-width="1"/><path d="M3.250 9.775h4.0M3.250 11.92h4.0" stroke="#b8b8b8" stroke-width="0.800"/><path d="M8 14.500l1.200-2.800 4-4q1.200-0.600 2.200 0.600t0.400 2.200l-4 4z" fill="#38bc14" stroke="#1c7a08" stroke-width="0.400"/><path d="M8 14.500l1.200-2.800 2.600 2.200z" fill="#e8c414"/></svg>
<svg class="i" style="left:751.0px;top:142.5px" width="20" height="20" viewBox="0 0 16 16"><rect x="0.300" y="2" width="4.500" height="2.200" fill="#111"/><path d="M7.750 0.300h4.500a3.250 3.250 0 0 1 0 6.500h-2.250l-1.800 1.800v-1.800h-2.250a3.250 3.250 0 0 1 0-6.500z" fill="#f2f2f2" stroke="#2a2a2a" stroke-width="1"/><path d="M7.750 2.5749999999999997h4.500M7.750 4.720h4.500" stroke="#b8b8b8" stroke-width="0.800"/><path d="M9.500 7.500l1.200-2.800 4-4q1.200-0.600 2.200 0.600t0.400 2.200l-4 4z" fill="#38bc14" stroke="#1c7a08" stroke-width="0.400"/><path d="M9.500 7.500l1.200-2.800 2.600 2.200z" fill="#e8c414"/><path d="M0.300 12.600h3M3.300 10.200v4.800M5.800 10.200v4.800M5.800 12.600h3" stroke="#111" stroke-width="1.300" fill="none"/><path d="M11 10.300c-2.200 1.500-2.200 3.300 0 4.800M13 10.300c2.200 1.500 2.200 3.300 0 4.800" stroke="#111" stroke-width="1.300" fill="none"/></svg>
<svg class="i" style="left:779.0px;top:142.5px" width="20" height="20" viewBox="0 0 16 16"><path d="M3.750 0.300h4.500a3.250 3.250 0 0 1 0 6.500h-2.250l-1.800 1.800v-1.800h-2.250a3.250 3.250 0 0 1 0-6.500z" fill="#f2f2f2" stroke="#2a2a2a" stroke-width="1"/><path d="M3.750 2.5749999999999997h4.500M3.750 4.720h4.500" stroke="#b8b8b8" stroke-width="0.800"/><path d="M8.500 7.500l1.200-2.800 4-4q1.200-0.600 2.200 0.600t0.400 2.200l-4 4z" fill="#38bc14" stroke="#1c7a08" stroke-width="0.400"/><path d="M8.500 7.500l1.200-2.800 2.600 2.200z" fill="#e8c414"/><path d="M0.300 12.600h3M6.300 10.300c-3 1.500-3 3.300 0 4.800M10.500 10.300c3 1.500 3 3.300 0 4.800M12.800 12.600h3" stroke="#111" stroke-width="1.400" fill="none"/></svg>
<svg class="i" style="left:814.0px;top:142.5px" width="20" height="20" viewBox="0 0 16 16"><rect x="0.300" y="2" width="4.500" height="2.200" fill="#aeaeca"/><path d="M7.750 0.300h4.500a3.250 3.250 0 0 1 0 6.500h-2.250l-1.800 1.800v-1.800h-2.250a3.250 3.250 0 0 1 0-6.500z" fill="#dedeea" stroke="#aeaeca" stroke-width="1"/><path d="M7.750 2.5749999999999997h4.500M7.750 4.720h4.500" stroke="#b8b8b8" stroke-width="0.800"/><path d="M8 5l5 5" stroke="#c4c4d8" stroke-width="2.500"/><path d="M0.300 12.600h3M3.300 10.200v4.800M5.800 10.200v4.800M5.800 12.600h3" stroke="#aeaeca" stroke-width="1.300" fill="none"/><path d="M7.500 10.300h8v5h-8zM7.500 12.800h8M10.200 10.300v5M12.900 10.300v5" stroke="#aeaeca" stroke-width="0.900" fill="#e2e2ee"/></svg>
<svg class="i" style="left:848.0px;top:142.5px" width="20" height="20" viewBox="0 0 16 16"><rect x="0.300" y="2" width="4.500" height="2.200" fill="#111"/><path d="M7.750 0.300h4.500a3.250 3.250 0 0 1 0 6.500h-2.250l-1.800 1.800v-1.800h-2.250a3.250 3.250 0 0 1 0-6.500z" fill="#f2f2f2" stroke="#2a2a2a" stroke-width="1"/><path d="M7.750 2.5749999999999997h4.500M7.750 4.720h4.500" stroke="#b8b8b8" stroke-width="0.800"/><path d="M0.300 12.600h3M3.300 10.200v4.800M5.800 10.200v4.800M5.800 12.600h3" stroke="#111" stroke-width="1.300" fill="none"/><rect x="8" y="10.300" width="8" height="5" fill="#fff"/><path d="M8 10.300h8" stroke="#18a0a0" stroke-width="1.300"/><path d="M8 15.300h8" stroke="#1a1ae0" stroke-width="1.300"/><path d="M8 12.800h8M10.700 10.300v5M13.400 10.300v5" stroke="#222" stroke-width="0.800"/></svg>
<svg class="i" style="left:883.0px;top:142.5px" width="20" height="20" viewBox="0 0 16 16"><path d="M1.500 0.500h10l3 3v12h-13z" fill="#d6d6e5" stroke="#b6b6ce" stroke-width="1"/><path d="M3.500 4h7M3.500 6.300h8.500M3.500 8.600h8.500M3.500 10.900h8.500M3.500 13.200h5" stroke="#b6b6ce" stroke-width="1"/><path d="M9 8h6.500v7.500h-6.500z" fill="#cbcbde" stroke="#b6b6ce" stroke-width="0.800"/></svg>
<svg class="i" style="left:911.0px;top:142.5px" width="20" height="20" viewBox="0 0 16 16"><path d="M5 0.500h8l2.500 2.500v8h-10.500z" fill="#d6d6e5" stroke="#b6b6ce" stroke-width="0.900"/><path d="M6.500 3h5" stroke="#b6b6ce" stroke-width="0.900"/><path d="M0.300 10l5-4v8z" fill="#b6b6ce"/><circle cx="9.500" cy="9" r="4" fill="#e8e8f1" stroke="#b6b6ce" stroke-width="1.400"/><path d="M12.500 12l3 3.500" stroke="#b6b6ce" stroke-width="1.900"/></svg>
<svg class="i" style="left:939.0px;top:142.5px" width="20" height="20" viewBox="0 0 16 16"><path d="M5 0.500h8l2.500 2.500v8h-10.500z" fill="#d6d6e5" stroke="#b6b6ce" stroke-width="0.900"/><path d="M6.500 3h5" stroke="#b6b6ce" stroke-width="0.900"/><path d="M0.300 6v8l5-4z" fill="#b6b6ce"/><circle cx="9.500" cy="9" r="4" fill="#e8e8f1" stroke="#b6b6ce" stroke-width="1.400"/><path d="M12.500 12l3 3.500" stroke="#b6b6ce" stroke-width="1.900"/></svg>
<svg class="i" style="left:974.0px;top:142.5px" width="20" height="20" viewBox="0 0 16 16"><path d="M0.500 3h4.500M5 1v4M6.500 1v4M6.500 3h4.500M12.500 1l-1.500 2 1.500 2M13.500 1l1.500 2-1.500 2M15 3h1M0.500 8h4.500M5 6v4M6.500 6v4M6.500 8h4.500M12.500 6l-1.500 2 1.500 2M13.500 6l1.500 2-1.500 2M15 8h1M8.500 8v5h2.500M12.500 11l-1.500 2 1.500 2M13.500 11l1.500 2-1.500 2M15 13h1" stroke="#1414f0" stroke-width="1.200" fill="none"/><path d="M2 3l2.500-1.500v3zM2 8l2.500-1.500v3z" fill="#1414f0"/></svg>
<div style="left:998px;top:138px;width:27.5px;height:27.5px;background:linear-gradient(#ffc98a,#ffb565 50%,#ffa94e);border:1.500px solid #4a4a84;"></div>
<svg class="i" style="left:1001.5px;top:142.5px" width="20" height="20" viewBox="0 0 16 16"><path d="M0.500 3h4.500M5 1v4M6.500 1v4M6.500 3h4.500M12.500 1l-1.500 2 1.500 2M13.500 1l1.500 2-1.500 2M15 3h1M0.500 8h4.500M5 6v4M6.500 6v4M6.500 8h4.500M12.500 6l-1.500 2 1.500 2M13.500 6l1.500 2-1.500 2M15 8h1M8.500 8v5h2.500M12.500 11l-1.500 2 1.500 2M13.500 11l1.500 2-1.500 2M15 13h1" stroke="#1414f0" stroke-width="1.200" fill="none"/><path d="M2 3l2.500-1.500v3zM2 8l2.500-1.500v3z" fill="#1414f0"/><path d="M6 7l1-2.500 5.500-5q1.300-0.500 2.300 0.500t0.500 2.300l-5.500 5z" fill="#f01414"/><path d="M6 7l1-2.500 2.800 2z" fill="#f4e41c" stroke="#222" stroke-width="0.300"/></svg>
<svg class="i" style="left:1029.0px;top:142.5px" width="20" height="20" viewBox="0 0 16 16"><path d="M5.500 2h6l1.500 1.500v7h-7.500z" fill="#d2d2d2" stroke="#4c4c4c" stroke-width="0.800"/><path d="M6.500 4.500h5M6.500 6.300h5M6.500 8.100h5" stroke="#4c4c4c" stroke-width="0.800"/><circle cx="9.300" cy="6" r="5.300" fill="none" stroke="#1414f0" stroke-width="1.200"/><path d="M13 10l3 3.500" stroke="#1414f0" stroke-width="1.300"/><rect x="0" y="10" width="8.500" height="5.500" fill="#1c1c1c"/><rect x="0.800" y="11.500" width="2.500" height="3.300" fill="#e41010"/><rect x="4" y="11.500" width="3.800" height="3.300" fill="#e2e2e2"/><path d="M3.500 15h1" stroke="#c020c0" stroke-width="0.800"/></svg>
<svg class="i" style="left:1056.0px;top:142.5px" width="20" height="20" viewBox="0 0 16 16"><path d="M5.500 3h6v7h-6z" fill="#e2e2e2" stroke="#8a8a8a" stroke-width="0.700"/><circle cx="9.300" cy="6" r="5.300" fill="none" stroke="#1414f0" stroke-width="1.200"/><path d="M13 10l3 3.500" stroke="#1414f0" stroke-width="1.300"/><path d="M8 7l1-2.300 5-4.600q1.200-0.500 2 0.500t0.500 2l-5 4.600z" fill="#f01414"/><path d="M8 7l1-2.300 2.500 1.800z" fill="#f4e41c"/><rect x="0" y="10" width="8.500" height="5.500" fill="#1c1c1c"/><rect x="0.800" y="11.500" width="2.500" height="3.300" fill="#e41010"/><rect x="4" y="11.500" width="3.800" height="3.300" fill="#e2e2e2"/><path d="M3.500 15h1" stroke="#c020c0" stroke-width="0.800"/></svg>
<svg class="i" style="left:1084.0px;top:142.5px" width="20" height="20" viewBox="0 0 16 16"><rect x="1" y="0.500" width="11.500" height="6.500" fill="#c2c2d7"/><text x="1.800" y="6" font-size="6.300" font-weight="bold" font-family="Liberation Sans" fill="#e8e8f2" textLength="10" lengthAdjust="spacingAndGlyphs">Dev</text><circle cx="9.500" cy="10" r="3.800" fill="#ececf4" stroke="#b8b8d0" stroke-width="1.400"/><path d="M12.300 13l3 3" stroke="#b8b8d0" stroke-width="1.900"/></svg>
<svg class="i" style="left:1111.5px;top:142.5px" width="20" height="20" viewBox="0 0 16 16"><path d="M12 12l3.500 3.700" stroke="#a01c1c" stroke-width="1.900"/><circle cx="7.500" cy="7.500" r="6.300" fill="#fff" stroke="#0c0c0c" stroke-width="1.900"/><circle cx="7.500" cy="7.500" r="7.400" fill="none" stroke="#1a1ac8" stroke-width="0.700"/><path d="M3 6.300h5.500M5.700 3.700v5.300M7.300 9.700h5" stroke="#0c0c0c" stroke-width="2.100"/></svg>
<div style="left:4px;top:169px;width:216px;height:33px;background:linear-gradient(#f7f7fb 0%,#e6e6f1 35%,#cfcfe2 65%,#aeaecb 100%);border-radius:5px 3px 3px 5px;"></div>
<svg class="i" style="left:9.7px;top:174.8px" width="5" height="28.5"><rect x="1.200" y="1.20" width="2.800" height="2.800" fill="#fff"/><rect x="0" y="0.00" width="2.900" height="2.900" fill="#50508a"/><rect x="1.200" y="6.50" width="2.800" height="2.800" fill="#fff"/><rect x="0" y="5.30" width="2.900" height="2.900" fill="#50508a"/><rect x="1.200" y="11.80" width="2.800" height="2.800" fill="#fff"/><rect x="0" y="10.60" width="2.900" height="2.900" fill="#50508a"/><rect x="1.200" y="17.10" width="2.800" height="2.800" fill="#fff"/><rect x="0" y="15.90" width="2.900" height="2.900" fill="#50508a"/><rect x="1.200" y="22.40" width="2.800" height="2.800" fill="#fff"/><rect x="0" y="21.20" width="2.900" height="2.900" fill="#50508a"/></svg>
<div class="t" style="left:21.5px;top:176px;font-size:15px;transform:scaleX(0.9667);">导航</div>
<svg class="i" style="left:180px;top:177px" width="34" height="14" viewBox="0 0 34 14"><path d="M3 1.500h5M3.500 1.500v6M7.500 1.500v6M6.500 1.500v6M1.500 7.500h8M5.500 7.500v5" stroke="#000" stroke-width="1.600" fill="none"/><path d="M21 2.500l8.500 8.500M29.500 2.500l-8.500 8.500" stroke="#000" stroke-width="1.900"/></svg>
<div style="left:4px;top:202px;width:216px;height:31px;background:linear-gradient(#a6a6c4,#8f8fb4 50%,#7a7aa4);"></div>
<div class="t" style="left:10px;top:210.8px;font-size:13px;transform:scaleX(0.9385);color:#fff;font-weight:bold;">工程</div>
<div class="tb" style="left:8px;top:235px;width:211px;height:30px;"></div>
<svg class="i" style="left:9.0px;top:238px" width="22" height="22" viewBox="0 0 18 18"><path d="M1.500 5h8l2.500 2.500v9.500h-10.500z" fill="#fff" stroke="#444" stroke-width="1"/><path d="M12 1v7M8.500 4.500h7" stroke="#f07010" stroke-width="2.600"/></svg>
<svg class="i" style="left:36.0px;top:238px" width="22" height="22" viewBox="0 0 18 18"><path d="M2 3h6l2 2v7h-8z" fill="#cfe0ff" stroke="#3a62c8" stroke-width="0.900"/><path d="M7 7h6l2 2v8h-8z" fill="#e8f0ff" stroke="#3a62c8" stroke-width="0.900"/><path d="M8.500 11h5M8.500 13h5M8.500 15h5" stroke="#3a62c8" stroke-width="0.700"/></svg>
<svg class="i" style="left:64.0px;top:238px" width="22" height="22" viewBox="0 0 18 18"><path d="M2 3.500h9v10h-9z" fill="#d9d9e6" stroke="#b0b0c8" stroke-width="0.900"/><rect x="4.500" y="2" width="4" height="2.500" fill="#c4c4d6" stroke="#b0b0c8" stroke-width="0.600"/><path d="M7 8h6l2 2v7h-8z" fill="#ededf4" stroke="#b0b0c8" stroke-width="0.900"/></svg>
<svg class="i" style="left:92.0px;top:238px" width="22" height="22" viewBox="0 0 18 18"><path d="M1.500 1h6l2 2v8h-8z" fill="#fff" stroke="#444" stroke-width="0.900"/><path d="M3 4h4M3 6h5M3 8h5" stroke="#666" stroke-width="0.700"/><circle cx="12" cy="12.500" r="5" fill="#1f6be0" stroke="#0a3a9a" stroke-width="0.600"/><text x="12" y="16.300" text-anchor="middle" font-size="9.500" font-weight="bold" font-family="Liberation Serif" fill="#fff">i</text></svg>
<svg class="i" style="left:119.0px;top:238px" width="22" height="22" viewBox="0 0 18 18"><path d="M3.500 1.500h8l3 3v12h-11z" fill="#f4faff" stroke="#5a8ad8" stroke-width="1"/><path d="M5.500 9a3.500 3.500 0 0 1 6-2.200l1.300-1.300v4h-4l1.400-1.400a2 2 0 0 0-3.200 0.900zM12.500 11a3.500 3.500 0 0 1-6 2.200l-1.300 1.300v-4h4l-1.400 1.400a2 2 0 0 0 3.200-0.900z" fill="#18a838"/></svg>
<div style="left:147px;top:240px;width:1px;height:19px;background:#8a8aae;"></div>
<div style="left:148px;top:241px;width:1px;height:19px;background:#f6f6fb;"></div>
<svg class="i" style="left:155.0px;top:238px" width="22" height="22" viewBox="0 0 18 18"><path d="M0.500 7.500l5-6h5.500v6z" fill="#444"/><path d="M0.500 7.500h10.500l-1 1.500h-8z" fill="#888"/><rect x="6" y="5" width="4" height="11" fill="#e82020"/><rect x="10" y="6" width="4.500" height="10" fill="#555"/><path d="M11.500 8v6" stroke="#bbb" stroke-width="1"/><rect x="8" y="4" width="3" height="2" fill="#2a9a3a"/></svg>
<svg class="i" style="left:176px;top:248px" width="7" height="4"><path d="M0 0h7l-3.500 4z" fill="#000"/></svg>
<div style="left:5px;top:266px;width:213px;height:406px;background:#fff;"></div>
<div style="left:199px;top:266px;width:19px;height:387px;background:#f0f0f0;"></div>
<div style="left:200.5px;top:287px;width:16.5px;height:303.5px;background:#cdcdcd;"></div>
<svg class="i" style="left:203px;top:273px" width="11" height="7"><path d="M1 6l4.500-4.500 4.500 4.500" fill="none" stroke="#505050" stroke-width="1.800"/></svg>
<svg class="i" style="left:203px;top:638px" width="11" height="7"><path d="M1 1l4.500 4.500 4.500-4.500" fill="none" stroke="#505050" stroke-width="1.800"/></svg>
<div style="left:5px;top:653px;width:213px;height:19px;background:#f0f0f0;"></div>
<div style="left:26px;top:654.5px;width:137px;height:16.5px;background:#cdcdcd;"></div>
<svg class="i" style="left:11px;top:657px" width="7" height="11"><path d="M6 1l-4.500 4.500 4.500 4.500" fill="none" stroke="#505050" stroke-width="1.800"/></svg>
<svg class="i" style="left:184px;top:657px" width="7" height="11"><path d="M1 1l4.500 4.500-4.500 4.500" fill="none" stroke="#505050" stroke-width="1.800"/></svg>
<div style="left:0;top:0;width:199px;height:653px;overflow:hidden;">
<div style="left:15px;top:283px;width:1px;height:377px;background:repeating-linear-gradient(#9a9a9a 0 1px,transparent 1px 2.500px);"></div>
<div style="left:38.5px;top:408px;width:1px;height:252px;background:repeating-linear-gradient(#9a9a9a 0 1px,transparent 1px 2.500px);"></div>
<div style="left:62px;top:433px;width:1px;height:19px;background:repeating-linear-gradient(#9a9a9a 0 1px,transparent 1px 2.500px);"></div>
<div style="left:62px;top:533px;width:1px;height:19px;background:repeating-linear-gradient(#9a9a9a 0 1px,transparent 1px 2.500px);"></div>
<div style="left:85px;top:458px;width:1px;height:45px;background:repeating-linear-gradient(#9a9a9a 0 1px,transparent 1px 2.500px);"></div>
<div style="left:85px;top:558px;width:1px;height:45px;background:repeating-linear-gradient(#9a9a9a 0 1px,transparent 1px 2.500px);"></div>
<div style="left:15px;top:278px;width:12.5px;height:1px;background:repeating-linear-gradient(90deg,#9a9a9a 0 1px,transparent 1px 2.500px);"></div>
<svg class="i" style="left:9.5px;top:272.75px" width="11" height="11" viewBox="0 0 11 11"><rect x="0.500" y="0.500" width="10" height="10" fill="#fff" stroke="#8a8a8a" stroke-width="1"/><path d="M2.500 5.500h6M5.500 2.500v6" stroke="#222" stroke-width="1.200"/></svg>
<svg class="i" style="left:26.5px;top:266.75px" width="22" height="22" viewBox="0 0 19 19"><path d="M1.500 6.500h5.500l1.500 2h9v9.500h-16z" fill="#e0a020" stroke="#a87410" stroke-width="1"/><path d="M1.500 9.500h16v8.500h-16z" fill="#f6cf58" stroke="#a87410" stroke-width="1"/><path d="M2.500 10.500h14" stroke="#fdeea0" stroke-width="0.900"/><rect x="6" y="2" width="7" height="9" fill="#333"/><path d="M7 4h5M7 6h5" stroke="#8c8" stroke-width="0.900"/><path d="M8 17l7-9" stroke="#1858d0" stroke-width="2.400"/><circle cx="15.500" cy="6.500" r="2.500" fill="none" stroke="#1858d0" stroke-width="1.600"/></svg>
<div class="t" style="left:55px;top:270.25px;font-size:15px;transform:scaleX(0.9667);">参数</div>
<div style="left:15px;top:303px;width:12.5px;height:1px;background:repeating-linear-gradient(90deg,#9a9a9a 0 1px,transparent 1px 2.500px);"></div>
<svg class="i" style="left:26.5px;top:291.75px" width="22" height="22" viewBox="0 0 19 19"><path d="M1.500 6.500h5.500l1.500 2h9v9.500h-16z" fill="#e0a020" stroke="#a87410" stroke-width="1"/><path d="M1.500 9.500h16v8.500h-16z" fill="#f6cf58" stroke="#a87410" stroke-width="1"/><path d="M2.500 10.500h14" stroke="#fdeea0" stroke-width="0.900"/><rect x="5" y="1.500" width="5" height="13" fill="#444"/><rect x="10" y="3" width="6" height="13" fill="#777"/><rect x="11.500" y="4.500" width="1.500" height="3" fill="#e02020"/></svg>
<div class="t" style="left:55px;top:295.25px;font-size:15px;transform:scaleX(1.0258);">特殊模块(智能功能模块</div>
<div style="left:15px;top:328px;width:12.5px;height:1px;background:repeating-linear-gradient(90deg,#9a9a9a 0 1px,transparent 1px 2.500px);"></div>
<svg class="i" style="left:26.5px;top:316.75px" width="22" height="22" viewBox="0 0 19 19"><circle cx="8" cy="8" r="7" fill="#2878d8"/><path d="M3 6c2-3 5-4 8-3c-1 2-3 2-3 4s-3 1-5-1zM10 12c1-2 3-2 4-1c-1 2-2 3-4 3z" fill="#38b848"/><path d="M7 7h8v11h-8z" fill="#fff" stroke="#555" stroke-width="0.800"/><path d="M8.500 10h5M8.500 12.500h5M8.500 15h3" stroke="#888" stroke-width="0.800"/><path d="M11 14l6-6 1.500 1.500-6 6z" fill="#38a828"/></svg>
<div class="t" style="left:55px;top:320.25px;font-size:15px;transform:scaleX(0.9952);">全局软元件注释</div>
<div style="left:15px;top:353px;width:12.5px;height:1px;background:repeating-linear-gradient(90deg,#9a9a9a 0 1px,transparent 1px 2.500px);"></div>
<svg class="i" style="left:9.5px;top:347.75px" width="11" height="11" viewBox="0 0 11 11"><rect x="0.500" y="0.500" width="10" height="10" fill="#fff" stroke="#8a8a8a" stroke-width="1"/><path d="M2.500 5.500h6M5.500 2.500v6" stroke="#222" stroke-width="1.200"/></svg>
<svg class="i" style="left:26.5px;top:341.75px" width="22" height="22" viewBox="0 0 19 19"><path d="M1.500 6.500h5.500l1.500 2h9v9.500h-16z" fill="#e0a020" stroke="#a87410" stroke-width="1"/><path d="M1.500 9.500h16v8.500h-16z" fill="#f6cf58" stroke="#a87410" stroke-width="1"/><path d="M2.500 10.500h14" stroke="#fdeea0" stroke-width="0.900"/><circle cx="9" cy="6" r="5.500" fill="#2878d8"/><path d="M5 4c2-2 4-2 6-1c-1 2-5 4-6 1z" fill="#38b848"/><path d="M7 9h10v8h-10z" fill="#fff" stroke="#2a2ac8" stroke-width="0.900"/><path d="M7 11.500h10M7 14h10M10.500 9v8M14 9v8" stroke="#2a2ac8" stroke-width="0.800"/></svg>
<div class="t" style="left:55px;top:345.25px;font-size:15px;transform:scaleX(0.9917);">全局标签</div>
<div style="left:15px;top:378px;width:12.5px;height:1px;background:repeating-linear-gradient(90deg,#9a9a9a 0 1px,transparent 1px 2.500px);"></div>
<svg class="i" style="left:9.5px;top:372.75px" width="11" height="11" viewBox="0 0 11 11"><rect x="0.500" y="0.500" width="10" height="10" fill="#fff" stroke="#8a8a8a" stroke-width="1"/><path d="M2.500 5.500h6M5.500 2.500v6" stroke="#222" stroke-width="1.200"/></svg>
<svg class="i" style="left:26.5px;top:366.75px" width="22" height="22" viewBox="0 0 19 19"><path d="M1.500 6.500h5.500l1.500 2h9v9.500h-16z" fill="#e0a020" stroke="#a87410" stroke-width="1"/><path d="M1.500 9.500h16v8.500h-16z" fill="#f6cf58" stroke="#a87410" stroke-width="1"/><path d="M2.500 10.500h14" stroke="#fdeea0" stroke-width="0.900"/><path d="M5 3h12v9h-12z" fill="#333"/><path d="M6.500 4.500h9v6h-9z" fill="#8ab0c8"/><path d="M2 8l9 7" stroke="#28a838" stroke-width="2.600"/></svg>
<div class="t" style="left:55px;top:370.25px;font-size:15px;transform:scaleX(0.9917);">程序设置</div>
<div style="left:15px;top:403px;width:12.5px;height:1px;background:repeating-linear-gradient(90deg,#9a9a9a 0 1px,transparent 1px 2.500px);"></div>
<svg class="i" style="left:9.5px;top:397.75px" width="11" height="11" viewBox="0 0 11 11"><rect x="0.500" y="0.500" width="10" height="10" fill="#fff" stroke="#8a8a8a" stroke-width="1"/><path d="M2.500 5.500h6" stroke="#222" stroke-width="1.200"/></svg>
<svg class="i" style="left:26.5px;top:391.75px" width="22" height="22" viewBox="0 0 19 19"><path d="M1.500 6.500h5.500l1.500 2h9v9.500h-16z" fill="#e0a020" stroke="#a87410" stroke-width="1"/><path d="M1.500 9.500h16v8.500h-16z" fill="#f6cf58" stroke="#a87410" stroke-width="1"/><path d="M2.500 10.500h14" stroke="#fdeea0" stroke-width="0.900"/><circle cx="6" cy="5" r="2.600" fill="#e8a0c0"/><circle cx="12" cy="4" r="2.600" fill="#a0d8a0"/><rect x="13" y="3" width="4" height="5" fill="#78c878"/><path d="M1 9h17v9h-17z" fill="#f9e070" opacity="0.850"/></svg>
<div class="t" style="left:55px;top:395.25px;font-size:15px;transform:scaleX(0.9917);">程序部件</div>
<div style="left:38.5px;top:428px;width:13.0px;height:1px;background:repeating-linear-gradient(90deg,#9a9a9a 0 1px,transparent 1px 2.500px);"></div>
<svg class="i" style="left:33.0px;top:422.75px" width="11" height="11" viewBox="0 0 11 11"><rect x="0.500" y="0.500" width="10" height="10" fill="#fff" stroke="#8a8a8a" stroke-width="1"/><path d="M2.500 5.500h6" stroke="#222" stroke-width="1.200"/></svg>
<svg class="i" style="left:50.5px;top:416.75px" width="22" height="22" viewBox="0 0 19 19"><path d="M1 7h6l1.500 2h9.500v9h-17z" fill="#e8c060"/><path d="M5 2h8l3 3v12h-11z" fill="#e8ecf8" stroke="#7888b8" stroke-width="0.800"/><path d="M8 1h8l2 3v11h-10z" fill="#f4f6fc" stroke="#8898c0" stroke-width="0.700"/><path d="M1 11h14v7h-14z" fill="#f6e6a0" stroke="#c8a040" stroke-width="0.700"/></svg>
<div class="t" style="left:78.5px;top:420.25px;font-size:15px;transform:scaleX(1.0000);">程序</div>
<div style="left:62px;top:453px;width:13px;height:1px;background:repeating-linear-gradient(90deg,#9a9a9a 0 1px,transparent 1px 2.500px);"></div>
<svg class="i" style="left:56.5px;top:447.75px" width="11" height="11" viewBox="0 0 11 11"><rect x="0.500" y="0.500" width="10" height="10" fill="#fff" stroke="#8a8a8a" stroke-width="1"/><path d="M2.500 5.500h6" stroke="#222" stroke-width="1.200"/></svg>
<svg class="i" style="left:74px;top:441.75px" width="22" height="22" viewBox="0 0 19 19"><path d="M1.500 6.500h5.500l1.500 2h9v9.500h-16z" fill="#e0a020" stroke="#a87410" stroke-width="1"/><path d="M1.500 9.500h16v8.500h-16z" fill="#f6cf58" stroke="#a87410" stroke-width="1"/><path d="M2.500 10.500h14" stroke="#fdeea0" stroke-width="0.900"/><path d="M6 1.500h8l3 3v11h-11z" fill="#fff" stroke="#4a5a9a" stroke-width="0.900"/><path d="M7 8.500h3M10 6v5M13 6v5M13 8.500h3" stroke="#e01010" stroke-width="1.500"/><path d="M8 8.500l2-1.700v3.400zM15 8.500l-2-1.700v3.400z" fill="#e01010"/></svg>
<div class="t" style="left:102px;top:444.75px;font-size:15px;transform:scaleX(1.1067);">MAIN</div>
<div style="left:85px;top:478px;width:13.5px;height:1px;background:repeating-linear-gradient(90deg,#9a9a9a 0 1px,transparent 1px 2.500px);"></div>
<svg class="i" style="left:97.5px;top:466.75px" width="22" height="22" viewBox="0 0 19 19"><path d="M3 1.500h9l4 4v12.500h-13z" fill="#fff" stroke="#4a5a9a" stroke-width="1"/><path d="M12 1.500v4h4" fill="#dde4f4" stroke="#4a5a9a" stroke-width="0.800"/><path d="M4.500 10.500l4-3v6zM14.500 10.500l-4-3v6z" fill="#e01010"/><path d="M8.500 6.500v8M10.500 6.500v8" stroke="#e01010" stroke-width="1.200"/></svg>
<div class="t" style="left:125.5px;top:470.25px;font-size:15px;transform:scaleX(1.0000);">程序本体</div>
<div style="left:85px;top:503px;width:13.5px;height:1px;background:repeating-linear-gradient(90deg,#9a9a9a 0 1px,transparent 1px 2.500px);"></div>
<svg class="i" style="left:97.5px;top:491.75px" width="22" height="22" viewBox="0 0 19 19"><path d="M1 3l4-2h8v10l-4 2h-8z" fill="#a8d0f8" opacity="0.900"/><path d="M3 1.500h9v9h-9z" fill="#c8e0fc" stroke="#88b0e0" stroke-width="0.700"/><path d="M5 8h13v10h-13z" fill="#fff" stroke="#2a2ad8" stroke-width="1"/><path d="M5 11.300h13M5 14.600h13M9.300 8v10M13.600 8v10" stroke="#2a2ad8" stroke-width="0.900"/></svg>
<div class="t" style="left:125.5px;top:495.25px;font-size:15px;transform:scaleX(1.0000);">局部标签</div>
<div style="left:38.5px;top:528px;width:13.0px;height:1px;background:repeating-linear-gradient(90deg,#9a9a9a 0 1px,transparent 1px 2.500px);"></div>
<svg class="i" style="left:33.0px;top:522.75px" width="11" height="11" viewBox="0 0 11 11"><rect x="0.500" y="0.500" width="10" height="10" fill="#fff" stroke="#8a8a8a" stroke-width="1"/><path d="M2.500 5.500h6" stroke="#222" stroke-width="1.200"/></svg>
<svg class="i" style="left:50.5px;top:516.75px" width="22" height="22" viewBox="0 0 19 19"><path d="M1.500 6.500h5.500l1.500 2h9v9.500h-16z" fill="#e0a020" stroke="#a87410" stroke-width="1"/><path d="M1.500 9.500h16v8.500h-16z" fill="#f6cf58" stroke="#a87410" stroke-width="1"/><path d="M2.500 10.500h14" stroke="#fdeea0" stroke-width="0.900"/><path d="M4 3l5-2.500 5 2.500z" fill="#2858c8"/><rect x="6" y="3" width="9" height="4" fill="#2858c8"/><path d="M7 8h10v8h-10z" fill="#28a038" stroke="#106020" stroke-width="0.700"/><path d="M4 11h3M4 14h3" stroke="#28a038" stroke-width="1.300"/></svg>
<div class="t" style="left:78.5px;top:520.25px;font-size:15px;transform:scaleX(0.9457);">FB管理</div>
<div style="left:62px;top:553px;width:13px;height:1px;background:repeating-linear-gradient(90deg,#9a9a9a 0 1px,transparent 1px 2.500px);"></div>
<svg class="i" style="left:56.5px;top:547.75px" width="11" height="11" viewBox="0 0 11 11"><rect x="0.500" y="0.500" width="10" height="10" fill="#fff" stroke="#8a8a8a" stroke-width="1"/><path d="M2.500 5.500h6" stroke="#222" stroke-width="1.200"/></svg>
<div style="left:99px;top:541.25px;width:39px;height:24px;background:#efefef;"></div>
<svg class="i" style="left:74px;top:541.75px" width="22" height="22" viewBox="0 0 19 19"><path d="M1.500 6.500h5.500l1.500 2h9v9.500h-16z" fill="#e0a020" stroke="#a87410" stroke-width="1"/><path d="M1.500 9.500h16v8.500h-16z" fill="#f6cf58" stroke="#a87410" stroke-width="1"/><path d="M2.500 10.500h14" stroke="#fdeea0" stroke-width="0.900"/><path d="M6 7h10v8h-10z" fill="#30a840" stroke="#106020" stroke-width="0.700"/><path d="M3 9.500h3M3 12.500h3" stroke="#30a840" stroke-width="1.300"/><path d="M7 8h5v2h-5z" fill="#a0e0a8"/></svg>
<div class="t" style="left:102px;top:544.75px;font-size:15px;transform:scaleX(1.0856);">pinlv</div>
<div style="left:85px;top:578px;width:13.5px;height:1px;background:repeating-linear-gradient(90deg,#9a9a9a 0 1px,transparent 1px 2.500px);"></div>
<svg class="i" style="left:97.5px;top:566.75px" width="22" height="22" viewBox="0 0 19 19"><path d="M3 1.500h9l4 4v12.500h-13z" fill="#fff" stroke="#4a5a9a" stroke-width="1"/><path d="M12 1.500v4h4" fill="#dde4f4" stroke="#4a5a9a" stroke-width="0.800"/><path d="M4.500 10.500l4-3v6zM14.500 10.500l-4-3v6z" fill="#e01010"/><path d="M8.500 6.500v8M10.500 6.500v8" stroke="#e01010" stroke-width="1.200"/></svg>
<div class="t" style="left:125.5px;top:570.25px;font-size:15px;transform:scaleX(1.0000);">程序本体</div>
<div style="left:85px;top:603px;width:13.5px;height:1px;background:repeating-linear-gradient(90deg,#9a9a9a 0 1px,transparent 1px 2.500px);"></div>
<svg class="i" style="left:97.5px;top:591.75px" width="22" height="22" viewBox="0 0 19 19"><path d="M1 3l4-2h8v10l-4 2h-8z" fill="#a8d0f8" opacity="0.900"/><path d="M3 1.500h9v9h-9z" fill="#c8e0fc" stroke="#88b0e0" stroke-width="0.700"/><path d="M5 8h13v10h-13z" fill="#fff" stroke="#2a2ad8" stroke-width="1"/><path d="M5 11.300h13M5 14.600h13M9.300 8v10M13.600 8v10" stroke="#2a2ad8" stroke-width="0.900"/></svg>
<div class="t" style="left:125.5px;top:595.25px;font-size:15px;transform:scaleX(1.0000);">局部标签</div>
<div style="left:38.5px;top:628px;width:13.0px;height:1px;background:repeating-linear-gradient(90deg,#9a9a9a 0 1px,transparent 1px 2.500px);"></div>
<svg class="i" style="left:50.5px;top:616.75px" width="22" height="22" viewBox="0 0 19 19"><path d="M1.500 6.500h5.500l1.500 2h9v9.500h-16z" fill="#e0a020" stroke="#a87410" stroke-width="1"/><path d="M1.500 9.500h16v8.500h-16z" fill="#f6cf58" stroke="#a87410" stroke-width="1"/><path d="M2.500 10.500h14" stroke="#fdeea0" stroke-width="0.900"/><rect x="3" y="3" width="14" height="14" fill="#222"/><rect x="6" y="4" width="8" height="3.500" fill="#e82878"/><rect x="6" y="8.300" width="8" height="3.500" fill="#e8e020"/><rect x="6" y="12.600" width="8" height="3.500" fill="#58c838"/><path d="M4 5h1.300M4 8h1.300M4 11h1.300M4 14h1.300M14.800 5h1.300M14.800 8h1.300M14.800 11h1.300M14.800 14h1.300" stroke="#fff" stroke-width="1.200"/></svg>
<div class="t" style="left:78.5px;top:620.25px;font-size:15px;transform:scaleX(0.9889);">结构体</div>
<div style="left:38.5px;top:653px;width:13.0px;height:1px;background:repeating-linear-gradient(90deg,#9a9a9a 0 1px,transparent 1px 2.500px);"></div>
<svg class="i" style="left:50.5px;top:641.75px" width="22" height="22" viewBox="0 0 19 19"><path d="M1 7h6l1.500 2h9.500v9h-17z" fill="#e8c060"/><path d="M5 2h8l3 3v12h-11z" fill="#e8ecf8" stroke="#7888b8" stroke-width="0.800"/><path d="M8 1h8l2 3v11h-10z" fill="#f4f6fc" stroke="#8898c0" stroke-width="0.700"/><path d="M1 11h14v7h-14z" fill="#f6e6a0" stroke="#c8a040" stroke-width="0.700"/></svg>
<div class="t" style="left:78.5px;top:645.25px;font-size:15px;transform:scaleX(0.9952);">局部软元件注释</div>
</div>
<div style="left:4px;top:672px;width:216px;height:10px;background:linear-gradient(#c3c3da,#9d9dbf 60%,#8a8ab2);"></div>
<svg class="i" style="left:89px;top:675px" width="46" height="4"><rect x="0.0" y="0" width="2.200" height="2.200" fill="#2a2a6a"/><rect x="1.0" y="1" width="1.500" height="1.500" fill="#fff" opacity="0.800"/><rect x="4.4" y="0" width="2.200" height="2.200" fill="#2a2a6a"/><rect x="5.4" y="1" width="1.500" height="1.500" fill="#fff" opacity="0.800"/><rect x="8.8" y="0" width="2.200" height="2.200" fill="#2a2a6a"/><rect x="9.8" y="1" width="1.500" height="1.500" fill="#fff" opacity="0.800"/><rect x="13.200000000000001" y="0" width="2.200" height="2.200" fill="#2a2a6a"/><rect x="14.200000000000001" y="1" width="1.500" height="1.500" fill="#fff" opacity="0.800"/><rect x="17.6" y="0" width="2.200" height="2.200" fill="#2a2a6a"/><rect x="18.6" y="1" width="1.500" height="1.500" fill="#fff" opacity="0.800"/><rect x="22.0" y="0" width="2.200" height="2.200" fill="#2a2a6a"/><rect x="23.0" y="1" width="1.500" height="1.500" fill="#fff" opacity="0.800"/><rect x="26.400000000000002" y="0" width="2.200" height="2.200" fill="#2a2a6a"/><rect x="27.400000000000002" y="1" width="1.500" height="1.500" fill="#fff" opacity="0.800"/><rect x="30.800000000000004" y="0" width="2.200" height="2.200" fill="#2a2a6a"/><rect x="31.800000000000004" y="1" width="1.500" height="1.500" fill="#fff" opacity="0.800"/><rect x="35.2" y="0" width="2.200" height="2.200" fill="#2a2a6a"/><rect x="36.2" y="1" width="1.500" height="1.500" fill="#fff" opacity="0.800"/><rect x="39.6" y="0" width="2.200" height="2.200" fill="#2a2a6a"/><rect x="40.6" y="1" width="1.500" height="1.500" fill="#fff" opacity="0.800"/></svg>
<div style="left:4px;top:682px;width:216px;height:39px;background:linear-gradient(#fdeaa6 0%,#fbd67e 35%,#f7bb52 65%,#ee9f28 100%);border-top:1px solid #fff3c8;border-bottom:1px solid #c8862a;"></div>
<svg class="i" style="left:11px;top:686px" width="31" height="32" viewBox="0 0 31 32"><defs><linearGradient id="lg1" x1="0" y1="0" x2="1" y2="1"><stop offset="0" stop-color="#b4b4b4"/><stop offset="1" stop-color="#4a4a4a"/></linearGradient><linearGradient id="lg2" x1="0" y1="0" x2="1" y2="0"><stop offset="0" stop-color="#f04020"/><stop offset="1" stop-color="#c81c08"/></linearGradient></defs><path d="M6 4.200L22.500 1.500V20H6z" fill="#3c3c3c"/><path d="M7.300 5.500L18 3.700V19H7.300z" fill="url(#lg1)"/><path d="M-0.500 21.800L6 17.500H13V22.500H1z" fill="#a2a2a6"/><path d="M-0.500 21.800L1 22.500H13V23.500H0.500z" fill="#6a6a70"/><rect x="11.900" y="14.800" width="6.500" height="15.800" fill="url(#lg2)"/><rect x="13" y="11.500" width="4.500" height="3.500" fill="#3a3a3a"/><rect x="15.500" y="12" width="1.200" height="2.500" fill="#d02020"/><rect x="18.200" y="10.900" width="11" height="19.700" fill="#343434"/><rect x="21.700" y="13.500" width="1.500" height="6.500" fill="#3aa86a"/><path d="M26.200 14v4M26.200 19.500v3M26.200 24v4.500" stroke="#e8e8e8" stroke-width="2.600"/><path d="M19 20.500h5.500M19 25h5.500" stroke="#6a6a6a" stroke-width="1.600"/></svg>
<div class="t" style="left:47px;top:691.5px;font-size:16px;transform:scaleX(0.9375);font-weight:bold;">工程</div>
<div style="left:4px;top:721px;width:216px;height:41px;background:linear-gradient(#e2e2ee 0%,#d0d0e2 40%,#b9b9d3 70%,#a0a0c2 100%);border-top:1px solid #f4f4fa;border-bottom:1px solid #8a8ab0;"></div>
<svg class="i" style="left:9px;top:726px" width="34" height="32" viewBox="0 0 34 32"><path d="M2 5c5-3 10-3 14 0c4-3 9-3 14 0v17c-5-3-10-3-14 0c-4-3-9-3-14 0z" fill="#f7f0e4" stroke="#6a5a4a" stroke-width="1.200"/><path d="M16 5v17" stroke="#6a5a4a" stroke-width="1"/><path d="M4 8c4-2 7-2 10 0M4 11c4-2 7-2 10 0M4 14c4-2 7-2 10 0M18 8c4-2 7-2 10 0M18 11c4-2 7-2 10 0" stroke="#c8b8a0" stroke-width="0.800" fill="none"/><path d="M22 12l3 0 1 6 4 2v7h-9l-2-6z" fill="#f0c840" stroke="#b08a10" stroke-width="0.800"/><rect x="20" y="27" width="11" height="4" fill="#58b858"/></svg>
<div class="t" style="left:47.5px;top:732.5px;font-size:15.5px;transform:scaleX(0.9570);font-weight:bold;">用户库</div>
<div style="left:4px;top:762px;width:216px;height:41px;background:linear-gradient(#e4e4f0 0%,#d0d0e2 40%,#b5b5d1 70%,#9c9cbf 100%);border-top:1px solid #f4f4fa;"></div>
<svg class="i" style="left:168px;top:773px" width="22" height="20" viewBox="0 0 22 20"><rect x="1" y="4" width="10" height="13" fill="none" stroke="#2a9a3a" stroke-width="1.200"/><path d="M5 3l7-2h6v10h-13z" fill="#555"/><rect x="9" y="3" width="8" height="6" fill="#cfe4ff"/><rect x="11" y="9" width="9" height="10" fill="#333"/><path d="M12.500 12h6M12.500 15h6" stroke="#aaa" stroke-width="1"/><path d="M3 16h9v2.500h-9z" fill="#888"/></svg>
<svg class="i" style="left:201px;top:774px" width="10" height="16" viewBox="0 0 10 16"><path d="M1 1l3 2.500-3 2.500M5.500 1l3 2.500-3 2.500" fill="none" stroke="#111" stroke-width="1.300"/><path d="M1.500 11h7l-3.500 3.500z" fill="#111"/></svg>
<svg class="i" style="left:226px;top:170px" width="800" height="34" viewBox="0 0 800 34"><defs><linearGradient id="tg" x1="0" y1="0" x2="0" y2="1"><stop offset="0" stop-color="#f7f7fb"/><stop offset="0.600" stop-color="#e3e3ef"/><stop offset="1" stop-color="#d4d4e5"/></linearGradient><linearGradient id="tga" x1="0" y1="0" x2="0" y2="1"><stop offset="0" stop-color="#fffdf8"/><stop offset="0.450" stop-color="#fde6c0"/><stop offset="1" stop-color="#f9b450"/></linearGradient></defs><path d="M5 31.500L30 6q3-3.300 7-3.300H490.500q3 0 3 3V31.500z" fill="url(#tg)"/><path d="M5 31.500L30 6q3-3.300 7-3.300H490.500q3 0 3 3V31.500" fill="none" stroke="#3c5cc0" stroke-width="1.200"/><path d="M272 31.500V6q0-3.300 3-3.300H493 M272 31.500z" fill="none"/><path d="M272 31.500V6q0-3.300 3-3.300H487q4 0 7 3L468 31.500z" fill="url(#tg)"/><path d="M272 31.500V6q0-3.300 3-3.300H492" fill="none" stroke="#3c5cc0" stroke-width="1.200"/><path d="M464 31.500L489 6q3-3.300 7-3.300H763q3.500 0 3.500 3.500V31.500z" fill="url(#tga)"/><path d="M464 31.500L489 6q3-3.300 7-3.300H763q3.500 0 3.500 3.500V31.500" fill="none" stroke="#3c5cc0" stroke-width="1.200"/></svg>
<svg class="i" style="left:264px;top:177px" width="21" height="21" viewBox="0 0 21 21"><rect width="21" height="21" fill="#0a8a8a"/><circle cx="9" cy="7.500" r="7" fill="#fff" stroke="#999" stroke-width="0.800"/><path d="M3 5h12M3 8h12M6 2v11M9 1v13M12 2v11" stroke="#777" stroke-width="0.800"/><rect x="4" y="15.500" width="4.500" height="5.500" fill="#f01010"/><path d="M10.500 14v7M13 13v8M15.500 12v9" stroke="#222" stroke-width="1.600"/></svg>
<div class="t" style="left:289px;top:177px;font-size:15px;transform:scaleX(1.0025);">软元件/缓冲存储器批量监视-1</div>
<svg class="i" style="left:510px;top:178px" width="17" height="19" viewBox="0 0 17 19"><path d="M2.500 1.500h8l4 4v12h-12z" fill="#fff" stroke="#5a6aa8" stroke-width="1"/><path d="M10.500 1.500v4h4" fill="#dde4f4" stroke="#5a6aa8" stroke-width="0.800"/><path d="M4 11l3.500-2.800v5.600zM13 11l-3.500-2.800v5.600z" fill="#e01010"/><path d="M7.500 7.500v7M9.500 7.500v7" stroke="#e01010" stroke-width="1.100"/></svg>
<div class="t" style="left:534px;top:177px;font-size:15px;transform:scaleX(1.0420);">[PRG]写入 MAIN 1085步</div>
<svg class="i" style="left:729px;top:178px" width="17" height="19" viewBox="0 0 17 19"><path d="M2.500 1.500h8l4 4v12h-12z" fill="#fff" stroke="#5a6aa8" stroke-width="1"/><path d="M10.500 1.500v4h4" fill="#dde4f4" stroke="#5a6aa8" stroke-width="0.800"/><path d="M4 11l3.500-2.800v5.600zM13 11l-3.500-2.800v5.600z" fill="#e01010"/><path d="M7.500 7.500v7M9.500 7.500v7" stroke="#e01010" stroke-width="1.100"/></svg>
<div class="t" style="left:752px;top:177px;font-size:15px;transform:scaleX(1.0763);font-weight:bold;">[FB]写入 pinlv(MAIN.pinl...</div>
<div style="left:966px;top:176px;width:22px;height:20px;background:#fbf4e4;border:1px solid #e0d8c8;"></div>
<svg class="i" style="left:971px;top:180px" width="12" height="12"><path d="M1.500 1.500l9 9M10.500 1.500l-9 9" stroke="#888" stroke-width="1.900"/></svg>
<svg class="i" style="left:1862px;top:177px" width="56" height="16" viewBox="0 0 56 16"><path d="M8.500 2.500v9l-5-4.500z" fill="none" stroke="#111" stroke-width="1.100"/><path d="M24.500 2.500v9l5-4.500z" fill="none" stroke="#111" stroke-width="1.100"/><path d="M43 8h10l-5 5z" fill="#111"/></svg>
<div style="left:225.3px;top:200.3px;width:1695px;height:603px;background:#7890c4;"></div>
<div style="left:226.3px;top:201.3px;width:1694px;height:601px;background:#f8c27c;"></div>
<div style="left:228px;top:203px;width:1692px;height:598px;background:#f0f0f0;"></div>
<div style="left:228px;top:203px;width:1690.5px;height:596px;background:#838383;"></div>
<div style="left:230.3px;top:205px;width:1688.5px;height:594px;background:#fff;"></div>
<div style="left:1897.5px;top:205px;width:21px;height:594px;background:#f0f0f0;"></div>
<div style="left:1898.5px;top:508px;width:18px;height:22px;background:#cdcdcd;"></div>
<svg class="i" style="left:1901px;top:211px" width="12" height="8"><path d="M1 7l5-5 5 5" fill="none" stroke="#505050" stroke-width="1.800"/></svg>
<svg class="i" style="left:1901px;top:784px" width="12" height="8"><path d="M1 1l5 5 5-5" fill="none" stroke="#505050" stroke-width="1.800"/></svg>
<svg class="i" style="left:0;top:0" width="1920" height="1080"><path d="M427.5 205V798M1885.5 205V798M427.5 254H477.5M477.5 239.5V268.5M495 239.5V268.5M495 254H597M597 239.5V268.5M613.5 239.5V268.5M613.5 254H1387.5M1395.0 240.5H1387.5V267.5H1395.0M1872.5 240.5H1880V267.5H1872.5M1880 254H1885.5M546.5 254V455.5M546.5 355H597M597 340.5V369.5M613.5 340.5V369.5M613.5 355H716.5M716.5 340.5V369.5M733.5 340.5V369.5M708.0 369.5L741.5 341M733.5 355H1387.5M1395.0 341.5H1387.5V368.5H1395.0M1872.5 341.5H1880V368.5H1872.5M1880 355H1885.5M546.5 455.5H1626M1633.5 442.0H1626V469.0H1633.5M1872.5 442.0H1880V469.0H1872.5M1880 455.5H1885.5M427.5 556.5H477.5M477.5 542.0V571.0M495 542.0V571.0M495 556.5H597M597 542.0V571.0M613.5 542.0V571.0M588.5 571.0L621.5 542.5M613.5 556.5H1626M1633.5 543.0H1626V570.0H1633.5M1872.5 543.0H1880V570.0H1872.5M1880 556.5H1885.5M427.5 656.5H477.5M477.5 642.0V671.0M495 642.0V671.0M495 656.5H597M597 642.0V671.0M613.5 642.0V671.0M588.5 671.0L621.5 642.5M613.5 656.5H1626M1633.5 643.0H1626V670.0H1633.5M1872.5 643.0H1880V670.0H1872.5M1880 656.5H1885.5M427.5 757.5H477.5M477.5 743.0V772.0M495 743.0V772.0M495 757.5H597M597 743.0V772.0M613.5 743.0V772.0M588.5 772.0L621.5 743.5M613.5 757.5H1626M1633.5 744.0H1626V771.0H1633.5M1872.5 744.0H1880V771.0H1872.5M1880 757.5H1885.5M666 556.5V798" fill="none" stroke="#161616" stroke-width="1.250"/></svg>
<div style="left:1381.5px;top:205px;width:503px;height:100.5px;border:2.500px solid #0a0aa8;"></div>
<div class="t lad" style="left:445px;top:209.2px;font-size:27.2px;">M8123</div>
<div class="t lad" style="left:564px;top:209.2px;font-size:27.2px;">M5004</div>
<div class="t lad" style="left:564px;top:310.2px;font-size:27.2px;">M5005</div>
<div class="t lad" style="left:683.5px;top:310.2px;font-size:27.2px;">M8000</div>
<div class="t lad" style="left:445px;top:511.7px;font-size:27.2px;">M5201</div>
<div class="t lad" style="left:564px;top:511.7px;font-size:27.2px;">M5221</div>
<div class="t lad" style="left:445px;top:611.7px;font-size:27.2px;">M5202</div>
<div class="t lad" style="left:564px;top:611.7px;font-size:27.2px;">M5222</div>
<div class="t lad" style="left:445px;top:712.7px;font-size:27.2px;">M5203</div>
<div class="t lad" style="left:564px;top:712.7px;font-size:27.2px;">M5223</div>
<div class="t lad" style="left:1399px;top:239.3px;font-size:27.2px;letter-spacing:1.300px;">HEX</div>
<div class="t lad" style="left:1503px;top:239.3px;font-size:27.2px;">D43</div>
<div class="t lad" style="left:1621.5px;top:239.3px;font-size:27.2px;">D5300Z0</div>
<div class="t lad" style="left:1758px;top:239.3px;font-size:27.2px;">K4</div>
<div class="t lad" style="left:1399px;top:340.3px;font-size:27.2px;letter-spacing:1.300px;">HEX</div>
<div class="t lad" style="left:1503px;top:340.3px;font-size:27.2px;">D43</div>
<div class="t lad" style="left:1621.5px;top:340.3px;font-size:27.2px;">D5300Z0</div>
<div class="t lad" style="left:1758px;top:340.3px;font-size:27.2px;">K4</div>
<div class="t lad" style="left:1638px;top:440.8px;font-size:27.2px;">RST</div>
<div class="t lad" style="left:1754px;top:440.8px;font-size:27.2px;">M8123</div>
<div class="t lad" style="left:1638px;top:541.8px;font-size:27.2px;">RST</div>
<div class="t lad" style="left:1754px;top:541.8px;font-size:27.2px;">M5221</div>
<div class="t lad" style="left:1638px;top:641.8px;font-size:27.2px;">RST</div>
<div class="t lad" style="left:1754px;top:641.8px;font-size:27.2px;">M5222</div>
<div class="t lad" style="left:1638px;top:742.8px;font-size:27.2px;">RST</div>
<div class="t lad" style="left:1754px;top:742.8px;font-size:27.2px;">M5223</div>
<div class="t lad" style="left:331px;top:239.3px;font-size:27.2px;">(</div>
<div class="t lad" style="left:362px;top:239.3px;font-size:27.2px;">577)</div>
<div class="t lad" style="left:331px;top:541.8px;font-size:27.2px;">(</div>
<div class="t lad" style="left:362px;top:541.8px;font-size:27.2px;">604)</div>
<div style="left:4px;top:807.5px;width:1916px;height:34px;background:linear-gradient(#f7f7fb 0%,#e6e6f1 35%,#cfcfe2 65%,#aeaecb 100%);border-radius:5px 0 0 5px;"></div>
<svg class="i" style="left:9.3px;top:814.8px" width="5" height="27.5"><rect x="1.200" y="1.20" width="2.800" height="2.800" fill="#fff"/><rect x="0" y="0.00" width="2.900" height="2.900" fill="#50508a"/><rect x="1.200" y="6.30" width="2.800" height="2.800" fill="#fff"/><rect x="0" y="5.10" width="2.900" height="2.900" fill="#50508a"/><rect x="1.200" y="11.40" width="2.800" height="2.800" fill="#fff"/><rect x="0" y="10.20" width="2.900" height="2.900" fill="#50508a"/><rect x="1.200" y="16.50" width="2.800" height="2.800" fill="#fff"/><rect x="0" y="15.30" width="2.900" height="2.900" fill="#50508a"/><rect x="1.200" y="21.60" width="2.800" height="2.800" fill="#fff"/><rect x="0" y="20.40" width="2.900" height="2.900" fill="#50508a"/></svg>
<div class="t" style="left:20px;top:817px;font-size:15px;transform:scaleX(1.0000);">输出</div>
<svg class="i" style="left:1882px;top:818px" width="34" height="14" viewBox="0 0 34 14"><path d="M3 1.500h5M3.500 1.500v6M7.500 1.500v6M6.500 1.500v6M1.500 7.500h8M5.500 7.500v5" stroke="#000" stroke-width="1.600" fill="none"/><path d="M21 2.500l8.500 8.500M29.500 2.500l-8.500 8.500" stroke="#000" stroke-width="1.900"/></svg>
<div style="left:4px;top:841.5px;width:1916px;height:201px;background:#f0f0f0;"></div>
<div style="left:6px;top:845.5px;width:1912px;height:21.5px;background:#f0f0f0;border-top:1px solid #a0a0a0;border-left:1px solid #a0a0a0;border-bottom:1px solid #fff;border-right:1px solid #fff;"></div>
<div class="t" style="left:6.8px;top:847px;font-size:15px;transform:scaleX(1.0033);">全部编译</div>
<div style="left:7px;top:872.5px;width:1909px;height:117px;background:#fff;border-top:1.500px solid #6a6a6a;border-left:1.500px solid #6a6a6a;border-bottom:1px solid #e0e0e0;"></div>
<div style="left:9px;top:874.5px;width:1886.5px;height:18.5px;background:#f0f0f0;border-bottom:1px solid #a0a0a0;"></div>
<div style="left:45px;top:874.5px;width:1px;height:18.5px;background:#a0a0a0;"></div>
<div style="left:46px;top:874.5px;width:1px;height:18.5px;background:#fff;"></div>
<div style="left:145px;top:874.5px;width:1px;height:18.5px;background:#a0a0a0;"></div>
<div style="left:146px;top:874.5px;width:1px;height:18.5px;background:#fff;"></div>
<div style="left:332.5px;top:874.5px;width:1px;height:18.5px;background:#a0a0a0;"></div>
<div style="left:333.5px;top:874.5px;width:1px;height:18.5px;background:#fff;"></div>
<div style="left:519.5px;top:874.5px;width:1px;height:18.5px;background:#a0a0a0;"></div>
<div style="left:520.5px;top:874.5px;width:1px;height:18.5px;background:#fff;"></div>
<div style="left:1145px;top:874.5px;width:1px;height:18.5px;background:#a0a0a0;"></div>
<div style="left:1146px;top:874.5px;width:1px;height:18.5px;background:#fff;"></div>
<div style="left:1245px;top:874.5px;width:1px;height:18.5px;background:#a0a0a0;"></div>
<div style="left:1246px;top:874.5px;width:1px;height:18.5px;background:#fff;"></div>
<div style="left:1894.5px;top:874.5px;width:1px;height:18.5px;background:#a0a0a0;"></div>
<div style="left:1895.5px;top:874.5px;width:1px;height:18.5px;background:#fff;"></div>
<div class="t mono" style="left:19px;top:877.5px;font-size:12.5px;transform:scaleX(0.9993);">No.</div>
<div class="t" style="left:50px;top:875.5px;font-size:15px;transform:scaleX(1.0000);">结果</div>
<div class="t" style="left:149.5px;top:875.5px;font-size:15px;transform:scaleX(1.0111);">数据名</div>
<div class="t" style="left:337.5px;top:875.5px;font-size:15px;transform:scaleX(1.0000);">分类</div>
<div class="t" style="left:525px;top:875.5px;font-size:15px;transform:scaleX(1.0000);">内容</div>
<div class="t" style="left:1150px;top:875.5px;font-size:15px;transform:scaleX(1.0000);">错误代码</div>
<div style="left:9px;top:893.5px;width:1886.5px;height:18.8px;background:#f0f0f0;"></div>
<div style="left:9px;top:911.8px;width:1886.5px;height:1px;background:#ececec;"></div>
<div style="left:9px;top:930.5999999999999px;width:1886.5px;height:1px;background:#ececec;"></div>
<div style="left:9px;top:949.3px;width:1886.5px;height:1px;background:#ececec;"></div>
<div style="left:9px;top:968.0999999999999px;width:1886.5px;height:1px;background:#ececec;"></div>
<div style="left:9px;top:986.8px;width:1886.5px;height:1px;background:#ececec;"></div>
<div style="left:45.5px;top:893.5px;width:1px;height:95px;background:#ececec;"></div>
<div style="left:145.5px;top:893.5px;width:1px;height:95px;background:#ececec;"></div>
<div style="left:333.0px;top:893.5px;width:1px;height:95px;background:#ececec;"></div>
<div style="left:520.0px;top:893.5px;width:1px;height:95px;background:#ececec;"></div>
<div style="left:1145.5px;top:893.5px;width:1px;height:95px;background:#ececec;"></div>
<div style="left:1245.5px;top:893.5px;width:1px;height:95px;background:#ececec;"></div>
<div class="t mono" style="left:34px;top:896.0px;font-size:12.5px;transform:scaleX(0.9979);">1</div>
<div class="t mono" style="left:50px;top:896.0px;font-size:12.5px;transform:scaleX(1.0059);">Information</div>
<div style="left:151px;top:900.8px;width:6px;height:1.3px;background:#222;"></div>
<div style="left:339px;top:900.8px;width:6px;height:1.3px;background:#222;"></div>
<div class="t osong" style="left:525px;top:893.5px;font-size:12.5px;transform:scaleX(0.9967);"><span class="k">字软元件</span> VAR<span class="k">用</span> <span class="k">使用</span>0<span class="k">点</span></div>
<div class="t mono" style="left:1150px;top:896.0px;font-size:12.5px;transform:scaleX(0.9863);">F1302</div>
<div class="t mono" style="left:34px;top:914.8px;font-size:12.5px;transform:scaleX(0.9979);">2</div>
<div class="t mono" style="left:50px;top:914.8px;font-size:12.5px;transform:scaleX(1.0059);">Information</div>
<div style="left:151px;top:919.5999999999999px;width:6px;height:1.3px;background:#222;"></div>
<div style="left:339px;top:919.5999999999999px;width:6px;height:1.3px;background:#222;"></div>
<div class="t osong" style="left:525px;top:912.3px;font-size:12.5px;transform:scaleX(0.9765);"><span class="k">位软元件</span> VAR<span class="k">用</span> <span class="k">使用</span>2<span class="k">点</span> <span class="k">（范围</span> M1534 - M1535 <span class="k">）</span></div>
<div class="t mono" style="left:1150px;top:914.8px;font-size:12.5px;transform:scaleX(0.9863);">F1305</div>
<div class="t mono" style="left:34px;top:933.5px;font-size:12.5px;transform:scaleX(0.9979);">3</div>
<div class="t mono" style="left:50px;top:933.5px;font-size:12.5px;transform:scaleX(1.0059);">Information</div>
<div style="left:151px;top:938.3px;width:6px;height:1.3px;background:#222;"></div>
<div style="left:339px;top:938.3px;width:6px;height:1.3px;background:#222;"></div>
<div class="t osong" style="left:525px;top:931.0px;font-size:12.5px;transform:scaleX(0.9960);"><span class="k">指针</span> VAR<span class="k">用</span> <span class="k">使用</span>0<span class="k">点</span></div>
<div class="t mono" style="left:1150px;top:933.5px;font-size:12.5px;transform:scaleX(0.9863);">F1310</div>
<div class="t mono" style="left:34px;top:952.3px;font-size:12.5px;transform:scaleX(0.9979);">4</div>
<div class="t mono" style="left:50px;top:952.3px;font-size:12.5px;transform:scaleX(1.0059);">Information</div>
<div style="left:151px;top:957.0999999999999px;width:6px;height:1.3px;background:#222;"></div>
<div style="left:339px;top:957.0999999999999px;width:6px;height:1.3px;background:#222;"></div>
<div class="t osong" style="left:525px;top:949.8px;font-size:12.5px;transform:scaleX(0.9964);"><span class="k">定时器</span> VAR<span class="k">用</span> <span class="k">使用</span>0<span class="k">点</span></div>
<div class="t mono" style="left:1150px;top:952.3px;font-size:12.5px;transform:scaleX(0.9863);">F1312</div>
<div class="t mono" style="left:34px;top:971.0px;font-size:12.5px;transform:scaleX(0.9979);">5</div>
<div class="t mono" style="left:50px;top:971.0px;font-size:12.5px;transform:scaleX(1.0059);">Information</div>
<div style="left:151px;top:975.8px;width:6px;height:1.3px;background:#222;"></div>
<div style="left:339px;top:975.8px;width:6px;height:1.3px;background:#222;"></div>
<div class="t osong" style="left:525px;top:968.5px;font-size:12.5px;transform:scaleX(0.9970);"><span class="k">高速定时器</span> VAR<span class="k">用</span> <span class="k">使用</span>0<span class="k">点</span></div>
<div class="t mono" style="left:1150px;top:971.0px;font-size:12.5px;transform:scaleX(0.9863);">F1316</div>
<div style="left:1896px;top:874.5px;width:20px;height:114px;background:#f0f0f0;"></div>
<div style="left:1897.5px;top:896px;width:17px;height:51px;background:#cdcdcd;"></div>
<svg class="i" style="left:1900px;top:881px" width="11" height="7"><path d="M1 6l4.500-4.500 4.500 4.500" fill="none" stroke="#505050" stroke-width="1.800"/></svg>
<svg class="i" style="left:1900px;top:975px" width="11" height="7"><path d="M1 1l4.500 4.500 4.500-4.500" fill="none" stroke="#505050" stroke-width="1.800"/></svg>
<div style="left:6px;top:994.5px;width:1912px;height:21.5px;background:#f0f0f0;border-top:1px solid #a0a0a0;border-left:1px solid #a0a0a0;border-bottom:1px solid #fff;border-right:1px solid #fff;"></div>
<div class="t osong" style="left:7.5px;top:995px;font-size:12.5px;transform:scaleX(0.9999);"><span class="k">已完成全部编译。</span>Error: 0, Warning: 0</div>
<div style="left:4px;top:1021.5px;width:1916px;height:21px;background:#f0f0f0;border-top:1px solid #dcdcdc;"></div>
<div style="left:588px;top:1023.5px;width:1px;height:19px;background:#d8d8d8;"></div>
<div style="left:711px;top:1023.5px;width:1px;height:19px;background:#d8d8d8;"></div>
<div style="left:821px;top:1023.5px;width:1px;height:19px;background:#d8d8d8;"></div>
<div style="left:1130px;top:1023.5px;width:1px;height:19px;background:#d8d8d8;"></div>
<div style="left:1266px;top:1023.5px;width:1px;height:19px;background:#d8d8d8;"></div>
<div style="left:1526px;top:1023.5px;width:1px;height:19px;background:#d8d8d8;"></div>
<div style="left:1736px;top:1023.5px;width:1px;height:19px;background:#d8d8d8;"></div>
<div style="left:1808px;top:1023.5px;width:1px;height:19px;background:#d8d8d8;"></div>
<div style="left:1853px;top:1023.5px;width:1px;height:19px;background:#d8d8d8;"></div>
<div style="left:0;top:1022px;width:1920px;height:20px;overflow:hidden;">
<div class="t" style="left:594px;top:4.5px;font-size:15px;transform:scaleX(1.0000);color:#000;">简体中文</div>
<div class="t" style="left:717px;top:4.5px;font-size:15px;transform:scaleX(1.0000);color:#000;">简单</div>
<div class="t" style="left:1137px;top:4.5px;font-size:15px;transform:scaleX(0.9640);color:#000;">FX3G/FX3GC</div>
<div class="t" style="left:1271px;top:4.5px;font-size:15px;transform:scaleX(1.0000);color:#000;">本站</div>
<div class="t" style="left:1532px;top:4.5px;font-size:15px;transform:scaleX(1.0507);color:#000;">(582/1082步)</div>
<div class="t" style="left:1742px;top:4.5px;font-size:15px;transform:scaleX(0.9667);color:#000;">改写</div>
<div class="t" style="left:1813px;top:4.5px;font-size:15px;transform:scaleX(1.0000);color:#b8b8b8;">大写</div>
<div class="t" style="left:1858px;top:4.5px;font-size:15px;transform:scaleX(1.0667);color:#000;">数字</div>
</div>
<div style="left:0px;top:1042px;width:1920px;height:38px;background:#1d2b30;"></div>
<div style="left:1914px;top:1042px;width:1px;height:38px;background:#5a676b;"></div>
<div style="left:278px;top:1042px;width:44.5px;height:38px;background:#3f4c50;"></div>
<div style="left:318.5px;top:1042px;width:4px;height:38px;background:#2c393d;"></div>
<div style="left:99px;top:1077.5px;width:35px;height:2.5px;background:#76b9ed;"></div>
<div style="left:191px;top:1077.5px;width:35px;height:2.5px;background:#76b9ed;"></div>
<div style="left:237px;top:1077.5px;width:35px;height:2.5px;background:#76b9ed;"></div>
<div style="left:278px;top:1077.5px;width:45px;height:2.5px;background:#76b9ed;"></div>
<div style="left:329px;top:1077.5px;width:34px;height:2.5px;background:#76b9ed;"></div>
<div style="left:375px;top:1077.5px;width:34px;height:2.5px;background:#76b9ed;"></div>
<div style="left:123px;top:1077.5px;width:11px;height:2.5px;background:#4f86b0;"></div>
<svg class="i" style="left:11.5px;top:1050.5px" width="21" height="21" viewBox="0 0 24 24"><path d="M1.500 4.500l8.500-1.300v8.300h-8.500zM11 3l11.500-1.800v10.300h-11.500zM1.500 12.500h8.500v8.300l-8.500-1.300zM11 12.500h11.500v10.300l-11.500-1.800z" fill="#fff"/></svg>
<svg class="i" style="left:56.0px;top:1049.5px" width="22" height="22" viewBox="0 0 24 24"><circle cx="14.500" cy="9" r="6.300" fill="none" stroke="#fff" stroke-width="1.700"/><path d="M10 13.500l-8 8.500" stroke="#fff" stroke-width="1.900"/></svg>
<svg class="i" style="left:105.0px;top:1049.5px" width="22" height="22" viewBox="0 0 24 24"><path d="M2 4h7l2 2.500h11v3h-20z" fill="#e8a820"/><path d="M2 8h20v12h-20z" fill="#fbd55c"/><path d="M6 13h12v7h-12z" fill="#3a8ad8"/><path d="M9 16h6v4h-6z" fill="#fbd55c"/></svg>
<svg class="i" style="left:150.5px;top:1049.0px" width="23" height="23" viewBox="0 0 24 24"><path d="M19 16.500A7.200 7.200 0 1 1 19.700 12.300H6" fill="none" stroke="#35a3ee" stroke-width="3.600"/><path d="M3.500 15c-3 6 2 6.500 8.500 1.500M14 5c4-3.500 8.500-4.500 8-1c-0.300 1.500-1 2.500-2 4" fill="none" stroke="#f2c21c" stroke-width="1.700"/></svg>
<svg class="i" style="left:196.5px;top:1049.0px" width="23" height="23" viewBox="0 0 24 24"><circle cx="12" cy="12" r="10.500" fill="#f2fdf0"/><path d="M18.300 16A6.500 6.500 0 1 1 18.900 12.300H7" fill="none" stroke="#58c42a" stroke-width="3.200"/><path d="M3.500 17.500c-2 4 3 3.500 8-0.500M15 5.500c3-2.500 6.500-3.500 6-0.500" fill="none" stroke="#58c42a" stroke-width="1.300"/></svg>
<svg class="i" style="left:243.0px;top:1049.5px" width="22" height="22" viewBox="0 0 24 24"><rect x="1" y="1" width="22" height="22" fill="#f4ecec"/><path d="M4 21l7-17h3l7 17h-4.500l-1.500-4h-6l-1.500 4zM10 13.500h4.500l-2.200-6z" fill="#c8202c"/></svg>
<svg class="i" style="left:289.5px;top:1050.0px" width="21" height="21" viewBox="0 0 24 24"><defs><linearGradient id="gt" x1="0" y1="0" x2="0" y2="1"><stop offset="0" stop-color="#ff6a6a"/><stop offset="1" stop-color="#e00808"/></linearGradient></defs><rect x="1" y="1" width="22" height="22" rx="2" fill="url(#gt)"/><path d="M4 8h6M7 8v5M14 8h6M14 5.500v5M4 14h6M10 11.500v5M14 14h6M17 14v5" stroke="#fff" stroke-width="1.900" fill="none"/></svg>
<svg class="i" style="left:335.0px;top:1049.5px" width="22" height="22" viewBox="0 0 24 24"><rect x="1" y="1" width="22" height="22" rx="4" fill="#e8742a"/><path d="M1 12c7-6 15-6 22 0v7a4 4 0 0 1-4 4h-14a4 4 0 0 1-4-4z" fill="#d85a18"/><text x="12" y="16" text-anchor="middle" font-size="9" font-weight="bold" font-family="Liberation Sans" fill="#ffe8c8" transform="rotate(-30 12 12)">PDF</text></svg>
<svg class="i" style="left:381.5px;top:1050.0px" width="21" height="21" viewBox="0 0 24 24"><rect x="2" y="2" width="20" height="6" fill="#9a2a8a"/><rect x="2" y="8.500" width="20" height="6" fill="#2a58b8"/><rect x="2" y="15" width="20" height="7" fill="#3a9a3a"/><rect x="2" y="2" width="4" height="20" fill="#b83020" opacity="0.700"/><rect x="9" y="1" width="6" height="22" fill="#c8a040"/><rect x="10" y="9" width="4" height="6" fill="#f0e0a0" stroke="#604010" stroke-width="0.800"/></svg>
<svg class="i" style="left:1575px;top:1044px" width="345" height="34" viewBox="0 0 345 34"><path d="M6 21l7-7 7 7" fill="none" stroke="#fff" stroke-width="1.600"/><rect x="35.500" y="11.500" width="15" height="10" fill="none" stroke="#fff" stroke-width="1.300"/><rect x="38" y="14" width="10" height="5" fill="#fff"/><path d="M51 14.500v4" stroke="#fff" stroke-width="1.600"/><path d="M31 8v4h4v-4M33 12v4h3" stroke="#fff" stroke-width="1.200" fill="none"/><circle cx="73" cy="17" r="9" fill="#38b838"/><path d="M64 17a9 9 0 0 0 18 0c-4 5-14 5-18 0z" fill="#f0d020"/><circle cx="73" cy="16" r="5" fill="#f0d020"/><path d="M70 16h6M73 13v6" stroke="#28a028" stroke-width="1.600"/><path d="M96 26a12 12 0 0 1 12-12" fill="none" stroke="#fff" stroke-width="1.300"/><path d="M99 26a9 9 0 0 1 9-9M102 26a6 6 0 0 1 6-6" fill="none" stroke="#c8c8c8" stroke-width="1.300"/><circle cx="106.500" cy="24.500" r="1.500" fill="#fff"/><g transform="translate(4 0)"><path d="M119 14h3l4-4v14l-4-4h-3z" fill="none" stroke="#fff" stroke-width="1.200"/><path d="M129 14.500a3.500 3.500 0 0 1 0 5" fill="none" stroke="#fff" stroke-width="1.100"/><path d="M131.500 12a7 7 0 0 1 0 10M134 9.500a10.500 10.500 0 0 1 0 15" fill="none" stroke="#7a8a8e" stroke-width="1.100"/></g><g transform="translate(-7 0)"><path d="M194 9l16-3 4 16-16 4z" fill="#f05a28"/><path d="M208 11c-5-2-9-1-9 2s9 2 9 5-5 3-10 1" fill="none" stroke="#fff" stroke-width="2.400"/></g><circle cx="273.500" cy="4.500" r="2.500" fill="#f01020"/><path d="M294.500 8.500h19.500v14h-7l-2.800 3.500-2.800-3.500h-6.900z" fill="none" stroke="#fff" stroke-width="1.300"/></svg>
<div class="t" style="left:1727.5px;top:1049px;font-size:20px;color:#fff;">英</div>
<div class="t" style="left:1805px;top:1051px;font-size:16px;transform:scaleX(0.9988);color:#fff;">12:37</div></div></body></html>
